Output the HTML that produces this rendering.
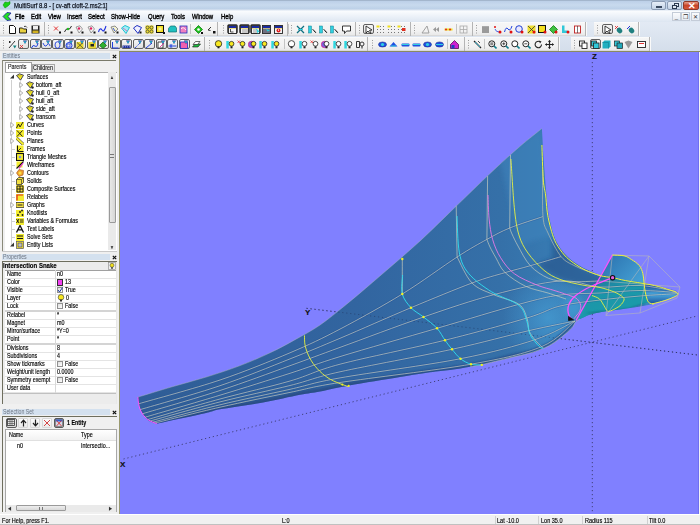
<!DOCTYPE html><html><head><meta charset="utf-8"><style>
*{margin:0;padding:0;box-sizing:border-box}
html,body{width:700px;height:525px;overflow:hidden;background:#f0f0f0;font-family:"Liberation Sans",sans-serif;font-size:7px;color:#000}
.a{position:absolute}
.tx{position:absolute;white-space:nowrap;line-height:8px;transform:scaleX(0.79);transform-origin:0 0;-webkit-text-stroke-width:0.15px}
#title{left:0;top:0;width:700px;height:11px;background:linear-gradient(#8a9cb2 0,#bcd0e8 1px,#c8daee 5px,#bcd0e8 9px,#dfe8f3 10px,#f4f7fb 11px)}
#menu{left:0;top:11px;width:700px;height:11px;background:linear-gradient(#fafcfe,#e9eff7 60%,#dde6f1)}
#tbarea{left:0;top:22px;width:700px;height:29px;background:linear-gradient(#e3eaf4,#d4deeb)}
.tb{position:absolute;background:linear-gradient(#fdfdfd,#f0f0f0 70%,#e6e6e6);border-bottom:1px solid #bdbdbd;border-right:1px solid #e0e0e0}
#left{left:0;top:51px;width:119px;height:463px;background:#f0f0f0}
#view{left:119px;top:51px;width:581px;height:463px;background:#8080ff;overflow:hidden;border-left:1px solid #9a9a70;border-top:1px solid #8a8a60}
#status{left:0;top:514px;width:700px;height:11px;background:#f0f0f0;border-top:1px solid #fff}
.hdr{position:absolute;height:6px;background:#d4e1ef;font-size:6.5px;color:#6a7380;line-height:6px;padding-left:1px;white-space:nowrap}
.grip{position:absolute;width:1px;height:9px;border-left:1px dotted #a0a0a0}
.sep{position:absolute;width:1px;height:10px;background:#c5c5c5;border-right:1px solid #fff}
.fb{position:absolute;width:11px;height:11px;border:1px solid #7a7a7a;border-radius:2px;background:linear-gradient(#f6f6f6,#dadada)}
</style></head><body>
<div id="title" class="a">
<svg class="a" style="left:2px;top:1px" width="9" height="8" viewBox="0 0 9 8"><path d="M1 4 L3 1 L6 1.5 L8 0.5 L8 3 L6 5 L3 7 Z" fill="#19d219" stroke="#0a8a0a" stroke-width="0.5"/></svg>
<div class="tx" style="left:14px;top:1.5px;font-size:7.5px;color:#101520;-webkit-text-stroke:0.25px #101520">MultiSurf 8.8 - [ cv-aft cloft-2.ms2:1]</div>
<div class="a" style="left:651px;top:1px;width:15px;height:9px;border:1px solid #8a9bb3;border-radius:2px;background:linear-gradient(#e6eef8,#c3d3e6)"><div class="a" style="left:4px;top:4px;width:6px;height:2px;background:#fff;border:1px solid #3a4a60"></div></div>
<div class="a" style="left:667px;top:1px;width:15px;height:9px;border:1px solid #8a9bb3;border-radius:2px;background:linear-gradient(#e6eef8,#c3d3e6)"><div class="a" style="left:6px;top:1px;width:5px;height:4px;border:1px solid #2a3a50;background:#dfe8f2"></div><div class="a" style="left:4px;top:3px;width:5px;height:4px;border:1px solid #2a3a50;background:#dfe8f2"></div></div>
<div class="a" style="left:683px;top:1px;width:16px;height:9px;border:1px solid #8d3a2a;border-radius:2px;background:linear-gradient(#e8a08a,#c8452a 50%,#d8583a)"><div class="a" style="left:4px;top:-1.5px;font-size:9px;font-weight:bold;color:#fff;line-height:10px">&#x2715;</div></div>
</div>
<div id="menu" class="a">
<svg class="a" style="left:2px;top:1px" width="10" height="9" viewBox="0 0 10 9"><path d="M1 4.5 L5 0.5 L9 1 L6 4.5 L9 8 L5 8.5 Z" fill="#22dd22" stroke="#1a1aa0" stroke-width="0.8"/></svg>
<div class="tx" style="left:15px;top:2px;font-size:7px;color:#000;transform:scaleX(0.85);-webkit-text-stroke:0.35px #000">File</div>
<div class="tx" style="left:31px;top:2px;font-size:7px;color:#000;transform:scaleX(0.85);-webkit-text-stroke:0.35px #000">Edit</div>
<div class="tx" style="left:48px;top:2px;font-size:7px;color:#000;transform:scaleX(0.85);-webkit-text-stroke:0.35px #000">View</div>
<div class="tx" style="left:67px;top:2px;font-size:7px;color:#000;transform:scaleX(0.85);-webkit-text-stroke:0.35px #000">Insert</div>
<div class="tx" style="left:88px;top:2px;font-size:7px;color:#000;transform:scaleX(0.85);-webkit-text-stroke:0.35px #000">Select</div>
<div class="tx" style="left:111px;top:2px;font-size:7px;color:#000;transform:scaleX(0.85);-webkit-text-stroke:0.35px #000">Show-Hide</div>
<div class="tx" style="left:148px;top:2px;font-size:7px;color:#000;transform:scaleX(0.85);-webkit-text-stroke:0.35px #000">Query</div>
<div class="tx" style="left:171px;top:2px;font-size:7px;color:#000;transform:scaleX(0.85);-webkit-text-stroke:0.35px #000">Tools</div>
<div class="tx" style="left:192px;top:2px;font-size:7px;color:#000;transform:scaleX(0.85);-webkit-text-stroke:0.35px #000">Window</div>
<div class="tx" style="left:221px;top:2px;font-size:7px;color:#000;transform:scaleX(0.85);-webkit-text-stroke:0.35px #000">Help</div>
<div class="a" style="left:672px;top:1px;width:9px;height:9px;border:1px solid #c4ccd8;background:linear-gradient(#fafbfd,#e6ebf2);font-size:6px;line-height:8px;text-align:center;color:#333">_</div>
<div class="a" style="left:681px;top:1px;width:9px;height:9px;border:1px solid #c4ccd8;background:linear-gradient(#fafbfd,#e6ebf2);font-size:6px;line-height:8px;text-align:center;color:#333">&#x2750;</div>
<div class="a" style="left:691px;top:1px;width:9px;height:9px;border:1px solid #c4ccd8;background:linear-gradient(#fafbfd,#e6ebf2);font-size:6px;line-height:8px;text-align:center;color:#333">&#x2715;</div>
</div>
<div id="tbarea" class="a"></div>
<div class="a" style="left:0px;top:22px;width:45px;height:14px;background:linear-gradient(#ffffff 0,#f6f6f6 1px,#f2f2f2 9px,#e9e9e9 13px,#c9c9c9 14px);border-right:1px solid #b4b4b4;box-shadow:1px 0 0 #fafafa"></div>
<div class="a" style="left:45px;top:22px;width:173px;height:14px;background:linear-gradient(#ffffff 0,#f6f6f6 1px,#f2f2f2 9px,#e9e9e9 13px,#c9c9c9 14px);border-right:1px solid #b4b4b4;box-shadow:1px 0 0 #fafafa"></div>
<div class="a" style="left:218px;top:22px;width:70px;height:14px;background:linear-gradient(#ffffff 0,#f6f6f6 1px,#f2f2f2 9px,#e9e9e9 13px,#c9c9c9 14px);border-right:1px solid #b4b4b4;box-shadow:1px 0 0 #fafafa"></div>
<div class="a" style="left:288px;top:22px;width:68px;height:14px;background:linear-gradient(#ffffff 0,#f6f6f6 1px,#f2f2f2 9px,#e9e9e9 13px,#c9c9c9 14px);border-right:1px solid #b4b4b4;box-shadow:1px 0 0 #fafafa"></div>
<div class="a" style="left:356px;top:22px;width:55px;height:14px;background:linear-gradient(#ffffff 0,#f6f6f6 1px,#f2f2f2 9px,#e9e9e9 13px,#c9c9c9 14px);border-right:1px solid #b4b4b4;box-shadow:1px 0 0 #fafafa"></div>
<div class="a" style="left:411px;top:22px;width:62px;height:14px;background:linear-gradient(#ffffff 0,#f6f6f6 1px,#f2f2f2 9px,#e9e9e9 13px,#c9c9c9 14px);border-right:1px solid #b4b4b4;box-shadow:1px 0 0 #fafafa"></div>
<div class="a" style="left:473px;top:22px;width:113px;height:14px;background:linear-gradient(#ffffff 0,#f6f6f6 1px,#f2f2f2 9px,#e9e9e9 13px,#c9c9c9 14px);border-right:1px solid #b4b4b4;box-shadow:1px 0 0 #fafafa"></div>
<div class="a" style="left:593.5px;top:22px;width:45.0px;height:14px;background:linear-gradient(#ffffff 0,#f6f6f6 1px,#f2f2f2 9px,#e9e9e9 13px,#c9c9c9 14px);border-right:1px solid #b4b4b4;box-shadow:1px 0 0 #fafafa"></div>
<svg class="a" style="left:2px;top:24px" width="3" height="10"><g fill="#9a9a9a"><rect x="1" y="1" width="1" height="1"/><rect x="1" y="3.5" width="1" height="1"/><rect x="1" y="6" width="1" height="1"/><rect x="1" y="8.5" width="1" height="1"/></g></svg>
<svg class="a" style="left:47px;top:24px" width="3" height="10"><g fill="#9a9a9a"><rect x="1" y="1" width="1" height="1"/><rect x="1" y="3.5" width="1" height="1"/><rect x="1" y="6" width="1" height="1"/><rect x="1" y="8.5" width="1" height="1"/></g></svg>
<svg class="a" style="left:222px;top:24px" width="3" height="10"><g fill="#9a9a9a"><rect x="1" y="1" width="1" height="1"/><rect x="1" y="3.5" width="1" height="1"/><rect x="1" y="6" width="1" height="1"/><rect x="1" y="8.5" width="1" height="1"/></g></svg>
<svg class="a" style="left:290px;top:24px" width="3" height="10"><g fill="#9a9a9a"><rect x="1" y="1" width="1" height="1"/><rect x="1" y="3.5" width="1" height="1"/><rect x="1" y="6" width="1" height="1"/><rect x="1" y="8.5" width="1" height="1"/></g></svg>
<svg class="a" style="left:358px;top:24px" width="3" height="10"><g fill="#9a9a9a"><rect x="1" y="1" width="1" height="1"/><rect x="1" y="3.5" width="1" height="1"/><rect x="1" y="6" width="1" height="1"/><rect x="1" y="8.5" width="1" height="1"/></g></svg>
<svg class="a" style="left:413px;top:24px" width="3" height="10"><g fill="#9a9a9a"><rect x="1" y="1" width="1" height="1"/><rect x="1" y="3.5" width="1" height="1"/><rect x="1" y="6" width="1" height="1"/><rect x="1" y="8.5" width="1" height="1"/></g></svg>
<svg class="a" style="left:475px;top:24px" width="3" height="10"><g fill="#9a9a9a"><rect x="1" y="1" width="1" height="1"/><rect x="1" y="3.5" width="1" height="1"/><rect x="1" y="6" width="1" height="1"/><rect x="1" y="8.5" width="1" height="1"/></g></svg>
<svg class="a" style="left:596px;top:24px" width="3" height="10"><g fill="#9a9a9a"><rect x="1" y="1" width="1" height="1"/><rect x="1" y="3.5" width="1" height="1"/><rect x="1" y="6" width="1" height="1"/><rect x="1" y="8.5" width="1" height="1"/></g></svg>
<svg class="a" style="left:7.5px;top:24.5px" width="9" height="9" viewBox="0 0 9 9"><path d="M1.5 0.5h4l2 2v6h-6z" fill="#fff" stroke="#111" stroke-width="1"/></svg>
<svg class="a" style="left:19.0px;top:24.5px" width="9" height="9" viewBox="0 0 9 9"><path d="M0.5 3h3l1 1h3v4h-7z" fill="#e8d040" stroke="#111" stroke-width="0.9"/><path d="M5 1.5 Q7 0.5 8 2.5" stroke="#111" fill="none" stroke-width="0.8"/></svg>
<svg class="a" style="left:31.0px;top:24.5px" width="9" height="9" viewBox="0 0 9 9"><rect x="0.5" y="0.5" width="8" height="8" fill="#222"/><rect x="2" y="1" width="5" height="3.5" fill="#eee"/><rect x="1.5" y="5.5" width="6" height="2.5" fill="#d0b020"/></svg>
<svg class="a" style="left:52.5px;top:24.5px" width="9" height="9" viewBox="0 0 9 9"><path d="M1 1.5L5 5.5M5 1.5L1 5.5" stroke="#e02020" stroke-width="0.9"/><rect x="6" y="6.5" width="2" height="2" fill="#111"/></svg>
<svg class="a" style="left:63.5px;top:24.5px" width="9" height="9" viewBox="0 0 9 9"><path d="M0.5 7 Q2 3 4 4 T7.5 1" fill="none" stroke="#111" stroke-width="0.9"/><circle cx="4" cy="4" r="1.2" fill="#20c020"/><rect x="6.5" y="6.5" width="2" height="2" fill="#111"/></svg>
<svg class="a" style="left:74.5px;top:24.5px" width="9" height="9" viewBox="0 0 9 9"><path d="M1 2 L5 0.8 L7.5 4 L4 8 Z" fill="#f4f4f4" stroke="#777" stroke-width="0.7"/><circle cx="4" cy="3.5" r="1.2" fill="#e02060"/><rect x="6.5" y="6.5" width="2" height="2" fill="#111"/></svg>
<svg class="a" style="left:86.5px;top:24.5px" width="9" height="9" viewBox="0 0 9 9"><path d="M1 2 L5 0.8 L7.5 4 L4 8 Z" fill="#f4f4f4" stroke="#777" stroke-width="0.7"/><circle cx="4" cy="3.5" r="1.2" fill="#e02060"/><rect x="6.5" y="6.5" width="2" height="2" fill="#111"/></svg>
<svg class="a" style="left:98.0px;top:24.5px" width="9" height="9" viewBox="0 0 9 9"><path d="M0.5 7 Q2 2 4 5 T8 1" fill="none" stroke="#2030e0" stroke-width="1.1"/><rect x="6.5" y="6.5" width="2" height="2" fill="#111"/></svg>
<svg class="a" style="left:109.5px;top:24.5px" width="9" height="9" viewBox="0 0 9 9"><path d="M1 2 L5 1 L8 4 L4 8 Z" fill="#f0f0d0" stroke="#666" stroke-width="0.7"/><path d="M3 3 L5 6" stroke="#2040d0" stroke-width="0.9"/><rect x="6.5" y="6.5" width="2" height="2" fill="#111"/></svg>
<svg class="a" style="left:121.1px;top:24.5px" width="9" height="9" viewBox="0 0 9 9"><path d="M0.5 3 L4 0.5 L8.5 2.5 L5 8.5 Z" fill="#a0f0f8" stroke="#20c0d0" stroke-width="1"/><path d="M2 3 L6 6" stroke="#e040a0" stroke-width="0.7"/></svg>
<svg class="a" style="left:132.5px;top:24.5px" width="9" height="9" viewBox="0 0 9 9"><path d="M0.5 3 L4 0.5 L8.5 2.5 L5 8.5 Z" fill="#f0f0ff" stroke="#2030c0" stroke-width="1"/><rect x="6.5" y="6.5" width="2" height="2" fill="#111"/></svg>
<svg class="a" style="left:144.9px;top:24.5px" width="9" height="9" viewBox="0 0 9 9"><rect x="0.5" y="0.5" width="8" height="8" fill="#f0e030"/><circle cx="2.5" cy="2.5" r="1.5" fill="none" stroke="#333" stroke-width="0.7"/><circle cx="6.5" cy="2.5" r="1.5" fill="none" stroke="#333" stroke-width="0.7"/><circle cx="2.5" cy="6.5" r="1.5" fill="none" stroke="#333" stroke-width="0.7"/><circle cx="6.5" cy="6.5" r="1.5" fill="none" stroke="#333" stroke-width="0.7"/></svg>
<svg class="a" style="left:155.5px;top:24.5px" width="9" height="9" viewBox="0 0 9 9"><rect x="0.5" y="0.5" width="7" height="7" fill="#f4e020" stroke="#111" stroke-width="1"/><rect x="2.5" y="2.5" width="3" height="3" fill="#f8f0a0"/><rect x="7" y="7" width="2" height="2" fill="#111"/></svg>
<svg class="a" style="left:167.5px;top:24.5px" width="9" height="9" viewBox="0 0 9 9"><path d="M0.5 7 V3.5 L2.5 1 H7 L8.5 3 V7 Z" fill="#20c0c0" stroke="#107070" stroke-width="0.7"/></svg>
<svg class="a" style="left:178.5px;top:24.5px" width="9" height="9" viewBox="0 0 9 9"><rect x="1" y="1" width="7" height="7" fill="#f080c0" stroke="#2030c0" stroke-width="0.8"/><path d="M2 4 Q4 1 7 5" stroke="#fff" fill="none" stroke-width="0.8"/></svg>
<div class="a" style="left:190px;top:24px;width:1px;height:10px;background:#c4c4c4"></div>
<svg class="a" style="left:193.5px;top:24.5px" width="9" height="9" viewBox="0 0 9 9"><path d="M4.5 0.5 L8.5 4.5 L4.5 8.5 L0.5 4.5Z" fill="#20c020" stroke="#108010" stroke-width="0.8"/><circle cx="4.5" cy="4.5" r="1.3" fill="#fff"/><rect x="7" y="7" width="2" height="2" fill="#111"/></svg>
<svg class="a" style="left:206.5px;top:24.5px" width="9" height="9" viewBox="0 0 9 9"><path d="M1 5 L4 2 M1 5 L3.5 5.5" stroke="#222" stroke-width="0.9" fill="none"/><rect x="6" y="6" width="2.5" height="2.5" fill="#111"/></svg>
<div class="a" style="left:227px;top:24px;width:11px;height:10px;border:1px solid #606060;border-radius:2px;background:linear-gradient(#f6f6f6,#e0e0e0)"></div>
<div class="a" style="left:238.5px;top:24px;width:11.0px;height:10px;border:1px solid #606060;border-radius:2px;background:linear-gradient(#f6f6f6,#e0e0e0)"></div>
<div class="a" style="left:250px;top:24px;width:11px;height:10px;border:1px solid #606060;border-radius:2px;background:linear-gradient(#f6f6f6,#e0e0e0)"></div>
<svg class="a" style="left:228.0px;top:24.5px" width="9" height="9" viewBox="0 0 9 9"><rect x="0.5" y="0.5" width="8" height="8" fill="#f4f4f4" stroke="#222" stroke-width="0.9"/><rect x="1" y="1" width="7" height="2" fill="#1a2aa0"/><rect x="1" y="3" width="7" height="0.6" fill="#e8d040"/><path d="M2.5 4v3h3" stroke="#222" fill="none" stroke-width="0.8"/></svg>
<svg class="a" style="left:239.5px;top:24.5px" width="9" height="9" viewBox="0 0 9 9"><rect x="0.5" y="0.5" width="8" height="8" fill="#f4f4f4" stroke="#222" stroke-width="0.9"/><rect x="1" y="1" width="7" height="2" fill="#1a2aa0"/><rect x="1" y="3" width="7" height="0.6" fill="#e8d040"/><path d="M3 4v4M5 4v4M7 4v4" stroke="#666" stroke-width="0.6"/></svg>
<svg class="a" style="left:251.0px;top:24.5px" width="9" height="9" viewBox="0 0 9 9"><rect x="0.5" y="0.5" width="8" height="8" fill="#f4f4f4" stroke="#222" stroke-width="0.9"/><rect x="1" y="1" width="7" height="2" fill="#1a2aa0"/><rect x="1" y="3" width="7" height="0.6" fill="#e8d040"/><path d="M3 4v4M5 4v4" stroke="#666" stroke-width="0.6"/><path d="M5 3.5 L8 6.5 L6.3 6.5 L7 8.5" fill="#20d0e0" stroke="#20d0e0" stroke-width="0.8"/></svg>
<svg class="a" style="left:262.0px;top:24.5px" width="9" height="9" viewBox="0 0 9 9"><rect x="0.5" y="0.5" width="8" height="8" fill="#f4f4f4" stroke="#222" stroke-width="0.9"/><rect x="1" y="1" width="7" height="2" fill="#1a2aa0"/><rect x="1" y="3" width="7" height="0.6" fill="#e8d040"/><rect x="1" y="3.6" width="7" height="4.4" fill="#707080"/><path d="M4 4 L8 5.5 L5.5 6.5Z" fill="#20d0e0"/></svg>
<svg class="a" style="left:273.5px;top:24.5px" width="9" height="9" viewBox="0 0 9 9"><rect x="0.5" y="0.5" width="8" height="8" fill="#f4f4f4" stroke="#222" stroke-width="0.9"/><rect x="1" y="1" width="7" height="2" fill="#1a2aa0"/><rect x="1" y="3" width="7" height="0.6" fill="#e8d040"/><circle cx="4.5" cy="5.5" r="2" fill="#e02020"/><rect x="4.1" y="4.3" width="0.8" height="1.6" fill="#fff"/></svg>
<div class="a" style="left:288px;top:24px;width:1px;height:10px;background:#c4c4c4"></div>
<svg class="a" style="left:295.5px;top:24.5px" width="9" height="9" viewBox="0 0 9 9"><path d="M1 1L8 8M8 1L1 8" stroke="#107080" stroke-width="1.3"/><path d="M2 4.5h5" stroke="#30d0e0" stroke-width="1"/></svg>
<svg class="a" style="left:307.5px;top:24.5px" width="9" height="9" viewBox="0 0 9 9"><rect x="0.5" y="1" width="3" height="7" fill="#30d0e0" stroke="#108090" stroke-width="0.5"/><path d="M4.5 4 L7 7 M6 5.5 L8 8" stroke="#222" stroke-width="0.9"/></svg>
<svg class="a" style="left:318.5px;top:24.5px" width="9" height="9" viewBox="0 0 9 9"><rect x="0.5" y="1" width="3" height="7" fill="#30d0e0" stroke="#108090" stroke-width="0.5"/><path d="M4.5 4 L7 7 M6 5.5 L8 8" stroke="#222" stroke-width="0.9"/></svg>
<svg class="a" style="left:329.5px;top:24.5px" width="9" height="9" viewBox="0 0 9 9"><rect x="0.5" y="1" width="3" height="7" fill="#30d0e0" stroke="#108090" stroke-width="0.5"/><path d="M4.5 4 L7 7 M6 5.5 L8 8" stroke="#222" stroke-width="0.9"/></svg>
<svg class="a" style="left:341.5px;top:24.5px" width="9" height="9" viewBox="0 0 9 9"><path d="M0.5 1h8v5h-4l-2 2.5v-2.5h-2z" fill="#fff" stroke="#222" stroke-width="0.9"/></svg>
<div class="a" style="left:363px;top:24px;width:11px;height:10px;border:1px solid #606060;border-radius:2px;background:linear-gradient(#f6f6f6,#e0e0e0)"></div>
<svg class="a" style="left:364.0px;top:24.5px" width="9" height="9" viewBox="0 0 9 9"><path d="M2 1 L2 8 L4 6 L6 8.5 L7 8 L5.5 5.5 L8 5Z" fill="#fff" stroke="#111" stroke-width="0.8"/></svg>
<svg class="a" style="left:375.5px;top:24.5px" width="9" height="9" viewBox="0 0 9 9"><g fill="#777"><rect x="1" y="1" width="1" height="1"/><rect x="4" y="1" width="1" height="1"/><rect x="7" y="1" width="1" height="1"/><rect x="1" y="4" width="1" height="1"/><rect x="4" y="4" width="1" height="1"/><rect x="7" y="4" width="1" height="1"/><rect x="1" y="7" width="1" height="1"/><rect x="4" y="7" width="1" height="1"/><rect x="7" y="7" width="1" height="1"/></g><rect x="0.5" y="0.5" width="3" height="2" fill="#f0e020"/></svg>
<svg class="a" style="left:386.5px;top:24.5px" width="9" height="9" viewBox="0 0 9 9"><g fill="#777"><rect x="1" y="1" width="1" height="1"/><rect x="4" y="1" width="1" height="1"/><rect x="7" y="1" width="1" height="1"/><rect x="1" y="4" width="1" height="1"/><rect x="4" y="4" width="1" height="1"/><rect x="7" y="4" width="1" height="1"/><rect x="1" y="7" width="1" height="1"/><rect x="4" y="7" width="1" height="1"/><rect x="7" y="7" width="1" height="1"/></g><rect x="0.5" y="0.5" width="3" height="2" fill="#f0e020"/></svg>
<svg class="a" style="left:396.5px;top:24.5px" width="9" height="9" viewBox="0 0 9 9"><g fill="#777"><rect x="1" y="1" width="1" height="1"/><rect x="4" y="1" width="1" height="1"/><rect x="7" y="1" width="1" height="1"/><rect x="1" y="4" width="1" height="1"/><rect x="4" y="4" width="1" height="1"/><rect x="7" y="4" width="1" height="1"/><rect x="1" y="7" width="1" height="1"/><rect x="4" y="7" width="1" height="1"/><rect x="7" y="7" width="1" height="1"/></g><rect x="0.5" y="0.5" width="3" height="2" fill="#f0e020"/><rect x="5" y="3" width="3.5" height="3" fill="#e03020"/></svg>
<svg class="a" style="left:420.5px;top:24.5px" width="9" height="9" viewBox="0 0 9 9"><path d="M1 8 L6 1 L8 8Z" fill="none" stroke="#999" stroke-width="0.9"/></svg>
<svg class="a" style="left:431.5px;top:24.5px" width="9" height="9" viewBox="0 0 9 9"><path d="M1 4.5 L4 2 V7Z M4 4.5 L7 2 V7Z" fill="#999"/></svg>
<svg class="a" style="left:443.5px;top:24.5px" width="9" height="9" viewBox="0 0 9 9"><rect x="0.5" y="3.5" width="8" height="2" fill="#f0e020"/><circle cx="2" cy="4.5" r="1" fill="#e02020"/><circle cx="6" cy="4.5" r="1" fill="#e02020"/></svg>
<div class="a" style="left:456px;top:24px;width:1px;height:10px;background:#c4c4c4"></div>
<svg class="a" style="left:458.5px;top:24.5px" width="9" height="9" viewBox="0 0 9 9"><rect x="1" y="1" width="7" height="7" fill="none" stroke="#aaa" stroke-width="0.8"/><path d="M1 4.5h7M4.5 1v7" stroke="#aaa" stroke-width="0.8"/></svg>
<svg class="a" style="left:480.5px;top:24.5px" width="9" height="9" viewBox="0 0 9 9"><rect x="1" y="1" width="7" height="7" fill="#aaa"/><path d="M1 3h7M1 5h7M1 7h7" stroke="#777" stroke-width="0.6"/></svg>
<svg class="a" style="left:492.5px;top:24.5px" width="9" height="9" viewBox="0 0 9 9"><path d="M1 1 L3 3 M3 1L1 3" stroke="#e02020" stroke-width="0.8"/><path d="M2 4 Q3 7 6 7" fill="none" stroke="#2040e0" stroke-width="0.8"/><circle cx="7" cy="7" r="1.5" fill="#e01010"/></svg>
<svg class="a" style="left:503.5px;top:24.5px" width="9" height="9" viewBox="0 0 9 9"><path d="M0.5 7 Q2 1 4 4 T8 1" fill="none" stroke="#2040e0" stroke-width="1"/><circle cx="7" cy="7" r="1.5" fill="#e01010"/></svg>
<svg class="a" style="left:514.5px;top:24.5px" width="9" height="9" viewBox="0 0 9 9"><circle cx="4" cy="4" r="3.3" fill="#e8e8ff" stroke="#2040d0" stroke-width="1"/><circle cx="7" cy="7" r="1.5" fill="#e01010"/></svg>
<svg class="a" style="left:526.5px;top:24.5px" width="9" height="9" viewBox="0 0 9 9"><rect x="0.5" y="0.5" width="8" height="8" fill="#f0e030"/><path d="M1 1L8 8M8 1L1 8" stroke="#333" stroke-width="0.8"/><circle cx="7" cy="7" r="1.5" fill="#e01010"/></svg>
<svg class="a" style="left:537.5px;top:24.5px" width="9" height="9" viewBox="0 0 9 9"><rect x="0.5" y="0.5" width="7" height="7" fill="#f4e020" stroke="#111" stroke-width="1"/><circle cx="7" cy="7" r="1.5" fill="#e01010"/></svg>
<svg class="a" style="left:548.5px;top:24.5px" width="9" height="9" viewBox="0 0 9 9"><path d="M4.5 0.5 L8.5 4.5 L4.5 8.5 L0.5 4.5Z" fill="#40c040" stroke="#108010" stroke-width="0.8"/><circle cx="7" cy="7" r="1.5" fill="#e01010"/></svg>
<svg class="a" style="left:560.5px;top:24.5px" width="9" height="9" viewBox="0 0 9 9"><path d="M1 0.5 h2.5 v5 h3 v2.5 h-5.5z" fill="#30c8d8"/><circle cx="7" cy="7" r="1.5" fill="#e01010"/></svg>
<svg class="a" style="left:572.5px;top:24.5px" width="9" height="9" viewBox="0 0 9 9"><rect x="1.5" y="1" width="6" height="7" fill="#fff" stroke="#c02020" stroke-width="0.9"/><path d="M4.5 1v7" stroke="#222" stroke-width="0.6"/></svg>
<div class="a" style="left:602px;top:24px;width:10.5px;height:10px;border:1px solid #606060;border-radius:2px;background:linear-gradient(#f6f6f6,#e0e0e0)"></div>
<svg class="a" style="left:602.5px;top:24.5px" width="9" height="9" viewBox="0 0 9 9"><path d="M2 1 L2 8 L4 6 L6 8.5 L7 8 L5.5 5.5 L8 5Z" fill="#fff" stroke="#111" stroke-width="0.8"/></svg>
<svg class="a" style="left:614.0px;top:24.5px" width="9" height="9" viewBox="0 0 9 9"><path d="M1 1L4 4M4 1L1 4" stroke="#e02020" stroke-width="0.8"/><ellipse cx="5.5" cy="5.5" rx="2.5" ry="3" fill="#208080" transform="rotate(-40 5.5 5.5)"/></svg>
<svg class="a" style="left:625.5px;top:24.5px" width="9" height="9" viewBox="0 0 9 9"><path d="M1 4L4 1" stroke="#2030e0" stroke-width="1"/><ellipse cx="5.5" cy="5.5" rx="2.5" ry="3" fill="#208080" transform="rotate(-40 5.5 5.5)"/></svg>
<div class="a" style="left:0px;top:37px;width:205px;height:14px;background:linear-gradient(#ffffff 0,#f6f6f6 1px,#f2f2f2 9px,#e9e9e9 13px,#c9c9c9 14px);border-right:1px solid #b4b4b4;box-shadow:1px 0 0 #fafafa"></div>
<div class="a" style="left:205px;top:37px;width:163px;height:14px;background:linear-gradient(#ffffff 0,#f6f6f6 1px,#f2f2f2 9px,#e9e9e9 13px,#c9c9c9 14px);border-right:1px solid #b4b4b4;box-shadow:1px 0 0 #fafafa"></div>
<div class="a" style="left:368px;top:37px;width:97px;height:14px;background:linear-gradient(#ffffff 0,#f6f6f6 1px,#f2f2f2 9px,#e9e9e9 13px,#c9c9c9 14px);border-right:1px solid #b4b4b4;box-shadow:1px 0 0 #fafafa"></div>
<div class="a" style="left:465px;top:37px;width:94px;height:14px;background:linear-gradient(#ffffff 0,#f6f6f6 1px,#f2f2f2 9px,#e9e9e9 13px,#c9c9c9 14px);border-right:1px solid #b4b4b4;box-shadow:1px 0 0 #fafafa"></div>
<div class="a" style="left:571px;top:37px;width:78.5px;height:14px;background:linear-gradient(#ffffff 0,#f6f6f6 1px,#f2f2f2 9px,#e9e9e9 13px,#c9c9c9 14px);border-right:1px solid #b4b4b4;box-shadow:1px 0 0 #fafafa"></div>
<svg class="a" style="left:2px;top:39px" width="3" height="10"><g fill="#9a9a9a"><rect x="1" y="1" width="1" height="1"/><rect x="1" y="3.5" width="1" height="1"/><rect x="1" y="6" width="1" height="1"/><rect x="1" y="8.5" width="1" height="1"/></g></svg>
<svg class="a" style="left:208px;top:39px" width="3" height="10"><g fill="#9a9a9a"><rect x="1" y="1" width="1" height="1"/><rect x="1" y="3.5" width="1" height="1"/><rect x="1" y="6" width="1" height="1"/><rect x="1" y="8.5" width="1" height="1"/></g></svg>
<svg class="a" style="left:371px;top:39px" width="3" height="10"><g fill="#9a9a9a"><rect x="1" y="1" width="1" height="1"/><rect x="1" y="3.5" width="1" height="1"/><rect x="1" y="6" width="1" height="1"/><rect x="1" y="8.5" width="1" height="1"/></g></svg>
<svg class="a" style="left:467px;top:39px" width="3" height="10"><g fill="#9a9a9a"><rect x="1" y="1" width="1" height="1"/><rect x="1" y="3.5" width="1" height="1"/><rect x="1" y="6" width="1" height="1"/><rect x="1" y="8.5" width="1" height="1"/></g></svg>
<svg class="a" style="left:573px;top:39px" width="3" height="10"><g fill="#9a9a9a"><rect x="1" y="1" width="1" height="1"/><rect x="1" y="3.5" width="1" height="1"/><rect x="1" y="6" width="1" height="1"/><rect x="1" y="8.5" width="1" height="1"/></g></svg>
<svg class="a" style="left:7.5px;top:39.5px" width="9" height="9" viewBox="0 0 9 9"><path d="M1 8 L7 1" stroke="#222" stroke-width="0.9"/><rect x="1" y="1" width="1.5" height="2" fill="#222"/><path d="M5 5.5 h3.5 L6.8 8.5Z" fill="#108080"/></svg>
<div class="a" style="left:18.0px;top:39px;width:11.2px;height:10px;border:1px solid #606060;border-radius:2px;background:linear-gradient(#f6f6f6,#e0e0e0)"></div>
<svg class="a" style="left:19.1px;top:39.5px" width="9" height="9" viewBox="0 0 9 9"><path d="M1 5L4 8M4 5L1 8" stroke="#e02020" stroke-width="0.8"/><path d="M4 0.5 h4 l-2 3.5z" fill="#102080"/><circle cx="6" cy="2" r="0.9" fill="#30d0e0"/></svg>
<div class="a" style="left:29.5px;top:39px;width:11.200000000000003px;height:10px;border:1px solid #606060;border-radius:2px;background:linear-gradient(#f6f6f6,#e0e0e0)"></div>
<svg class="a" style="left:30.6px;top:39.5px" width="9" height="9" viewBox="0 0 9 9"><path d="M0.5 8 Q2 4 4 6 T7 3" fill="none" stroke="#2040e0" stroke-width="1"/><path d="M4 0.5 h4 l-2 3.5z" fill="#102080"/><circle cx="6" cy="2" r="0.9" fill="#30d0e0"/></svg>
<div class="a" style="left:40.9px;top:39px;width:11.200000000000003px;height:10px;border:1px solid #606060;border-radius:2px;background:linear-gradient(#f6f6f6,#e0e0e0)"></div>
<svg class="a" style="left:42.0px;top:39.5px" width="9" height="9" viewBox="0 0 9 9"><path d="M1 3 Q3 8 5 5 T8 6" fill="none" stroke="#2040e0" stroke-width="0.9"/><path d="M4 0.5 h4 l-2 3.5z" fill="#102080"/><circle cx="6" cy="2" r="0.9" fill="#30d0e0"/></svg>
<div class="a" style="left:52.4px;top:39px;width:11.200000000000003px;height:10px;border:1px solid #606060;border-radius:2px;background:linear-gradient(#f6f6f6,#e0e0e0)"></div>
<svg class="a" style="left:53.5px;top:39.5px" width="9" height="9" viewBox="0 0 9 9"><ellipse cx="3.5" cy="5" rx="2.5" ry="3.3" fill="none" stroke="#2040e0" stroke-width="0.9"/><path d="M4 0.5 h4 l-2 3.5z" fill="#102080"/><circle cx="6" cy="2" r="0.9" fill="#30d0e0"/></svg>
<div class="a" style="left:63.9px;top:39px;width:11.199999999999996px;height:10px;border:1px solid #606060;border-radius:2px;background:linear-gradient(#f6f6f6,#e0e0e0)"></div>
<svg class="a" style="left:65.0px;top:39.5px" width="9" height="9" viewBox="0 0 9 9"><circle cx="4" cy="5.5" r="3" fill="none" stroke="#2040e0" stroke-width="1"/><rect x="2" y="4" width="3" height="3" fill="none" stroke="#2040e0" stroke-width="0.7"/><path d="M4 0.5 h4 l-2 3.5z" fill="#102080"/><circle cx="6" cy="2" r="0.9" fill="#30d0e0"/></svg>
<div class="a" style="left:75.3px;top:39px;width:11.200000000000003px;height:10px;border:1px solid #606060;border-radius:2px;background:linear-gradient(#f6f6f6,#e0e0e0)"></div>
<svg class="a" style="left:76.4px;top:39.5px" width="9" height="9" viewBox="0 0 9 9"><rect x="0.5" y="2" width="7" height="6.5" fill="#e8d830"/><path d="M1 2.5 L7 8 M7 2.5 L1 8" stroke="#333" stroke-width="0.7"/><path d="M4 0.5 h4 l-2 3.5z" fill="#102080"/><circle cx="6" cy="2" r="0.9" fill="#30d0e0"/></svg>
<div class="a" style="left:86.8px;top:39px;width:11.200000000000003px;height:10px;border:1px solid #606060;border-radius:2px;background:linear-gradient(#f6f6f6,#e0e0e0)"></div>
<svg class="a" style="left:87.9px;top:39.5px" width="9" height="9" viewBox="0 0 9 9"><rect x="0.5" y="2" width="7.5" height="6.5" fill="#e8d830"/><rect x="2.5" y="4" width="3.5" height="2.5" fill="#222"/><path d="M4 0.5 h4 l-2 3.5z" fill="#102080"/><circle cx="6" cy="2" r="0.9" fill="#30d0e0"/></svg>
<div class="a" style="left:98.3px;top:39px;width:11.200000000000003px;height:10px;border:1px solid #606060;border-radius:2px;background:linear-gradient(#f6f6f6,#e0e0e0)"></div>
<svg class="a" style="left:99.4px;top:39.5px" width="9" height="9" viewBox="0 0 9 9"><path d="M4 2 L7.5 5.5 L4 8.5 L0.5 5.5Z" fill="#30b030" stroke="#106010" stroke-width="0.7"/><path d="M4 0.5 h4 l-2 3.5z" fill="#102080"/><circle cx="6" cy="2" r="0.9" fill="#30d0e0"/></svg>
<div class="a" style="left:109.8px;top:39px;width:11.200000000000003px;height:10px;border:1px solid #606060;border-radius:2px;background:linear-gradient(#f6f6f6,#e0e0e0)"></div>
<svg class="a" style="left:110.9px;top:39.5px" width="9" height="9" viewBox="0 0 9 9"><path d="M1.5 2v6h6" fill="none" stroke="#2040e0" stroke-width="1"/><path d="M4 0.5 h4 l-2 3.5z" fill="#102080"/><circle cx="6" cy="2" r="0.9" fill="#30d0e0"/></svg>
<div class="a" style="left:121.2px;top:39px;width:11.200000000000003px;height:10px;border:1px solid #606060;border-radius:2px;background:linear-gradient(#f6f6f6,#e0e0e0)"></div>
<svg class="a" style="left:122.3px;top:39.5px" width="9" height="9" viewBox="0 0 9 9"><rect x="0.5" y="5.5" width="8" height="2.5" fill="#2030a0"/><path d="M1 6.8h7" stroke="#fff" stroke-width="0.5" stroke-dasharray="1 1"/><path d="M4 0.5 h4 l-2 3.5z" fill="#102080"/><circle cx="6" cy="2" r="0.9" fill="#30d0e0"/></svg>
<div class="a" style="left:132.7px;top:39px;width:11.200000000000017px;height:10px;border:1px solid #606060;border-radius:2px;background:linear-gradient(#f6f6f6,#e0e0e0)"></div>
<svg class="a" style="left:133.8px;top:39.5px" width="9" height="9" viewBox="0 0 9 9"><path d="M1 8 L6 3" stroke="#2040e0" stroke-width="1" stroke-dasharray="1.2 0.8"/><path d="M4 0.5 h4 l-2 3.5z" fill="#102080"/><circle cx="6" cy="2" r="0.9" fill="#30d0e0"/></svg>
<div class="a" style="left:144.2px;top:39px;width:11.200000000000017px;height:10px;border:1px solid #606060;border-radius:2px;background:linear-gradient(#f6f6f6,#e0e0e0)"></div>
<svg class="a" style="left:145.3px;top:39.5px" width="9" height="9" viewBox="0 0 9 9"><path d="M1 8 L7 3" stroke="#2040e0" stroke-width="1"/><path d="M4 0.5 h4 l-2 3.5z" fill="#102080"/><circle cx="6" cy="2" r="0.9" fill="#30d0e0"/></svg>
<div class="a" style="left:155.6px;top:39px;width:11.200000000000017px;height:10px;border:1px solid #606060;border-radius:2px;background:linear-gradient(#f6f6f6,#e0e0e0)"></div>
<svg class="a" style="left:156.7px;top:39.5px" width="9" height="9" viewBox="0 0 9 9"><path d="M1 2h5v6h-5z" fill="#fff" stroke="#333" stroke-width="0.9"/><path d="M3 7L7 3" stroke="#e020a0" stroke-width="0.8"/><path d="M4 0.5 h4 l-2 3.5z" fill="#102080"/><circle cx="6" cy="2" r="0.9" fill="#30d0e0"/></svg>
<div class="a" style="left:167.1px;top:39px;width:11.200000000000017px;height:10px;border:1px solid #606060;border-radius:2px;background:linear-gradient(#f6f6f6,#e0e0e0)"></div>
<svg class="a" style="left:168.2px;top:39.5px" width="9" height="9" viewBox="0 0 9 9"><path d="M0.5 6 h8" stroke="#2040e0" stroke-width="1"/><path d="M2 4 L4 8 M4 4L2 8" stroke="#2040e0" stroke-width="0.7"/><path d="M4 0.5 h4 l-2 3.5z" fill="#102080"/><circle cx="6" cy="2" r="0.9" fill="#30d0e0"/></svg>
<div class="a" style="left:178.6px;top:39px;width:11.200000000000017px;height:10px;border:1px solid #606060;border-radius:2px;background:linear-gradient(#f6f6f6,#e0e0e0)"></div>
<svg class="a" style="left:179.7px;top:39.5px" width="9" height="9" viewBox="0 0 9 9"><rect x="0.5" y="2" width="7" height="6.5" fill="#f060b0" stroke="#2030c0" stroke-width="0.8"/><path d="M4 0.5 h4 l-2 3.5z" fill="#102080"/><circle cx="6" cy="2" r="0.9" fill="#30d0e0"/></svg>
<svg class="a" style="left:191.5px;top:39.5px" width="9" height="9" viewBox="0 0 9 9"><path d="M0.5 7 L3 4 H8.5 L6 7Z" fill="#20c040" stroke="#111" stroke-width="0.6"/><path d="M1 4.5 L3.5 1.5 H8 L5.5 4.5Z" fill="#fff" stroke="#111" stroke-width="0.6"/></svg>
<svg class="a" style="left:213.5px;top:39.5px" width="9" height="9" viewBox="0 0 9 9"><circle cx="4.5" cy="3.8" r="3.2" fill="#f8e820" stroke="#222" stroke-width="0.8"/><rect x="3.5" y="6.3" width="2" height="2" fill="#222"/></svg>
<svg class="a" style="left:225.5px;top:39.5px" width="9" height="9" viewBox="0 0 9 9"><rect x="0.3" y="1" width="2.5" height="7.5" fill="#30d8e0"/><circle cx="5.5" cy="3.8" r="2.4" fill="#f8e820" stroke="#222" stroke-width="0.8"/><rect x="4.5" y="6.3" width="2" height="2" fill="#222"/></svg>
<svg class="a" style="left:236.5px;top:39.5px" width="9" height="9" viewBox="0 0 9 9"><path d="M0.5 0.5L3 3M3 0.5L0.5 3" stroke="#e02020" stroke-width="0.7"/><circle cx="5.5" cy="3.8" r="2.4" fill="#f8e820" stroke="#222" stroke-width="0.8"/><rect x="4.5" y="6.3" width="2" height="2" fill="#222"/></svg>
<svg class="a" style="left:248.0px;top:39.5px" width="9" height="9" viewBox="0 0 9 9"><circle cx="3.5" cy="4.5" r="3.2" fill="#8060e0" stroke="#e02080" stroke-width="0.7"/><circle cx="5.5" cy="3.8" r="2.4" fill="#f8e820" stroke="#222" stroke-width="0.8"/><rect x="4.5" y="6.3" width="2" height="2" fill="#222"/></svg>
<svg class="a" style="left:259.2px;top:39.5px" width="9" height="9" viewBox="0 0 9 9"><rect x="0.3" y="1" width="2.5" height="7.5" fill="#30d8e0"/><circle cx="5.5" cy="3.8" r="2.4" fill="#f8e820" stroke="#222" stroke-width="0.8"/><rect x="4.5" y="6.3" width="2" height="2" fill="#222"/></svg>
<svg class="a" style="left:270.5px;top:39.5px" width="9" height="9" viewBox="0 0 9 9"><rect x="0.3" y="1" width="2.5" height="7.5" fill="#30d8e0"/><circle cx="5.5" cy="3.8" r="2.4" fill="#f8e820" stroke="#222" stroke-width="0.8"/><rect x="4.5" y="6.3" width="2" height="2" fill="#222"/></svg>
<div class="a" style="left:284px;top:39px;width:1px;height:10px;background:#c4c4c4"></div>
<svg class="a" style="left:286.5px;top:39.5px" width="9" height="9" viewBox="0 0 9 9"><circle cx="4.5" cy="3.8" r="3.2" fill="#fff" stroke="#222" stroke-width="0.8"/><rect x="3.5" y="6.3" width="2" height="2" fill="#222"/></svg>
<svg class="a" style="left:298.5px;top:39.5px" width="9" height="9" viewBox="0 0 9 9"><rect x="0.3" y="1" width="2.5" height="7.5" fill="#30d8e0"/><circle cx="5.5" cy="3.8" r="2.4" fill="#fff" stroke="#222" stroke-width="0.8"/><rect x="4.5" y="6.3" width="2" height="2" fill="#222"/></svg>
<svg class="a" style="left:309.5px;top:39.5px" width="9" height="9" viewBox="0 0 9 9"><path d="M0.5 0.5L3 3M3 0.5L0.5 3" stroke="#e02020" stroke-width="0.7"/><circle cx="5.5" cy="3.8" r="2.4" fill="#fff" stroke="#222" stroke-width="0.8"/><rect x="4.5" y="6.3" width="2" height="2" fill="#222"/></svg>
<svg class="a" style="left:320.5px;top:39.5px" width="9" height="9" viewBox="0 0 9 9"><circle cx="3.5" cy="4.5" r="3.2" fill="#8060e0" stroke="#e02080" stroke-width="0.7"/><circle cx="5.5" cy="3.8" r="2.4" fill="#fff" stroke="#222" stroke-width="0.8"/><rect x="4.5" y="6.3" width="2" height="2" fill="#222"/></svg>
<svg class="a" style="left:332.5px;top:39.5px" width="9" height="9" viewBox="0 0 9 9"><rect x="0.3" y="1" width="2.5" height="7.5" fill="#30d8e0"/><circle cx="5.5" cy="3.8" r="2.4" fill="#fff" stroke="#222" stroke-width="0.8"/><rect x="4.5" y="6.3" width="2" height="2" fill="#222"/></svg>
<svg class="a" style="left:343.5px;top:39.5px" width="9" height="9" viewBox="0 0 9 9"><rect x="0.3" y="1" width="2.5" height="7.5" fill="#30d8e0"/><circle cx="5.5" cy="3.8" r="2.4" fill="#fff" stroke="#222" stroke-width="0.8"/><rect x="4.5" y="6.3" width="2" height="2" fill="#222"/></svg>
<svg class="a" style="left:355.5px;top:39.5px" width="9" height="9" viewBox="0 0 9 9"><path d="M0.5 1.5h3v6h-3z" fill="none" stroke="#222" stroke-width="0.9"/><circle cx="6" cy="4" r="2" fill="none" stroke="#222" stroke-width="0.9"/><path d="M6 6v2.5" stroke="#222"/></svg>
<svg class="a" style="left:377.5px;top:39.5px" width="9" height="9" viewBox="0 0 9 9"><ellipse cx="4.5" cy="4.5" rx="4" ry="2.6" fill="#2050e0" stroke="#102080" stroke-width="0.5"/><circle cx="4.5" cy="4.5" r="1.6" fill="#30d0e0"/></svg>
<svg class="a" style="left:388.5px;top:39.5px" width="9" height="9" viewBox="0 0 9 9"><path d="M0.5 6.5 L4.5 2 L8.5 6.5Z" fill="#2050e0"/><path d="M2 6h5" stroke="#30d0e0"/></svg>
<svg class="a" style="left:400.5px;top:39.5px" width="9" height="9" viewBox="0 0 9 9"><rect x="0.5" y="3.5" width="8" height="3" rx="1" fill="#2050e0"/><path d="M1 4.5h7" stroke="#30d0e0"/></svg>
<svg class="a" style="left:411.5px;top:39.5px" width="9" height="9" viewBox="0 0 9 9"><rect x="0.5" y="3.5" width="8" height="3" rx="1" fill="#2050e0"/><path d="M1 4.5h7" stroke="#30d0e0"/></svg>
<svg class="a" style="left:422.5px;top:39.5px" width="9" height="9" viewBox="0 0 9 9"><ellipse cx="4.5" cy="4.5" rx="4" ry="2.6" fill="#2050e0" stroke="#102080" stroke-width="0.5"/><circle cx="4.5" cy="4.5" r="1.6" fill="#30d0e0"/></svg>
<svg class="a" style="left:434.5px;top:39.5px" width="9" height="9" viewBox="0 0 9 9"><ellipse cx="4.5" cy="4.5" rx="4" ry="2.6" fill="#2050e0" stroke="#102080" stroke-width="0.5"/><path d="M1 4.5h7" stroke="#30d0e0" stroke-width="1"/></svg>
<div class="a" style="left:447px;top:39px;width:1px;height:10px;background:#c4c4c4"></div>
<svg class="a" style="left:449.5px;top:39.5px" width="9" height="9" viewBox="0 0 9 9"><path d="M0.5 4.5 L4.5 0.5 L8.5 4.5 V8.5 H0.5Z" fill="#d020d0" stroke="#400040" stroke-width="0.7"/><rect x="1.5" y="5" width="3" height="3.5" fill="#2040c0"/></svg>
<svg class="a" style="left:472.5px;top:39.5px" width="9" height="9" viewBox="0 0 9 9"><path d="M1 1 L8 8" stroke="#222" stroke-width="1.3"/><path d="M2 2 L7 7" stroke="#30c0e0" stroke-width="0.8"/><path d="M5 1 L7 3" stroke="#222" stroke-width="0.8"/></svg>
<div class="a" style="left:484px;top:39px;width:1px;height:10px;background:#c4c4c4"></div>
<svg class="a" style="left:487.5px;top:39.5px" width="9" height="9" viewBox="0 0 9 9"><circle cx="3.8" cy="3.8" r="3" fill="#fff" stroke="#222" stroke-width="1"/><path d="M6 6 L8.5 8.5" stroke="#108090" stroke-width="1.6"/><rect x="2.3" y="2.3" width="3" height="3" fill="#888"/></svg>
<svg class="a" style="left:499.5px;top:39.5px" width="9" height="9" viewBox="0 0 9 9"><circle cx="3.8" cy="3.8" r="3" fill="#fff" stroke="#222" stroke-width="1"/><path d="M6 6 L8.5 8.5" stroke="#108090" stroke-width="1.6"/><path d="M2.3 3.8h3M3.8 2.3v3" stroke="#222" stroke-width="0.8"/></svg>
<svg class="a" style="left:510.5px;top:39.5px" width="9" height="9" viewBox="0 0 9 9"><circle cx="3.8" cy="3.8" r="3" fill="#fff" stroke="#222" stroke-width="1"/><path d="M6 6 L8.5 8.5" stroke="#108090" stroke-width="1.6"/></svg>
<svg class="a" style="left:521.5px;top:39.5px" width="9" height="9" viewBox="0 0 9 9"><circle cx="3.8" cy="3.8" r="3" fill="#fff" stroke="#222" stroke-width="1"/><path d="M6 6 L8.5 8.5" stroke="#108090" stroke-width="1.6"/><path d="M2.3 3.8h3" stroke="#222" stroke-width="0.8"/></svg>
<svg class="a" style="left:533.5px;top:39.5px" width="9" height="9" viewBox="0 0 9 9"><path d="M7.5 4.5 A3.2 3.2 0 1 1 6 1.8" fill="none" stroke="#222" stroke-width="1.1"/><path d="M5 0.5 L7.5 1.5 L6 3.5Z" fill="#222"/></svg>
<svg class="a" style="left:544.5px;top:39.5px" width="9" height="9" viewBox="0 0 9 9"><path d="M4.5 0.5v8M0.5 4.5h8" stroke="#222" stroke-width="1.2"/><path d="M4.5 0 L3 2h3z M4.5 9 L3 7h3z M0 4.5 L2 3v3z M9 4.5 L7 3v3z" fill="#222"/></svg>
<div class="a" style="left:590px;top:39px;width:11px;height:10px;border:1px solid #606060;border-radius:2px;background:linear-gradient(#f6f6f6,#e0e0e0)"></div>
<svg class="a" style="left:578.5px;top:39.5px" width="9" height="9" viewBox="0 0 9 9"><rect x="0.5" y="1" width="5" height="5" fill="none" stroke="#222" stroke-width="0.9"/><rect x="3" y="3" width="5" height="5.5" fill="#fff" stroke="#222" stroke-width="0.9"/></svg>
<svg class="a" style="left:591.0px;top:39.5px" width="9" height="9" viewBox="0 0 9 9"><rect x="0.5" y="1" width="5" height="5" fill="#30c8d8" stroke="#222" stroke-width="0.8"/><rect x="2.5" y="3" width="5.5" height="5.5" fill="#30c8d8" stroke="#222" stroke-width="0.8"/></svg>
<svg class="a" style="left:602.0px;top:39.5px" width="9" height="9" viewBox="0 0 9 9"><path d="M0.5 2.5 L2.5 0.5 H8.5 V6.5 L6.5 8.5 H0.5Z" fill="#20b0c0"/><path d="M0.5 2.5 H6.5 V8.5" fill="none" stroke="#108090" stroke-width="0.6"/></svg>
<svg class="a" style="left:613.5px;top:39.5px" width="9" height="9" viewBox="0 0 9 9"><rect x="0.5" y="1" width="5" height="5" fill="#30c8d8" stroke="#222" stroke-width="0.7"/><rect x="3" y="3" width="5.5" height="5.5" fill="#20a8b8" stroke="#222" stroke-width="0.7"/></svg>
<svg class="a" style="left:624.1px;top:39.5px" width="9" height="9" viewBox="0 0 9 9"><path d="M0.5 2 L4.5 0.5 L8.5 2 L4.5 8.5Z" fill="#999"/></svg>
<svg class="a" style="left:636.5px;top:39.5px" width="9" height="9" viewBox="0 0 9 9"><rect x="0.5" y="1.5" width="8" height="6" fill="#fff" stroke="#222" stroke-width="0.9"/><path d="M2 3.5h5" stroke="#e02020" stroke-width="0.9"/></svg>
<div id="left" class="a">
<div class="hdr" style="left:2px;top:2px;width:108px"><span style="display:inline-block;transform:scaleX(0.8);transform-origin:0 0">Entities</span></div>
<svg class="a" style="left:112px;top:3px" width="5" height="5"><path d="M0.8 0.8L4.2 4.2M4.2 0.8L0.8 4.2" stroke="#111" stroke-width="1.2"/></svg>
<div class="a" style="left:2px;top:9px;width:114px;height:1px;background:#7a7a6a"></div>
<div class="a" style="left:2px;top:9px;width:1px;height:191px;background:#8a8a7a"></div>
<div class="a" style="left:5px;top:11px;width:27px;height:10px;background:#fff;border:1px solid #a0a0a0;border-bottom:none"></div>
<div class="tx" style="left:8px;top:12px;font-size:6.8px;color:#222">Parents</div>
<div class="a" style="left:32px;top:12.5px;width:23px;height:8px;background:linear-gradient(#f4f4f4,#e0e0e0);border:1px solid #a8a8a8;border-bottom:none"></div>
<div class="tx" style="left:33px;top:13px;font-size:6.8px;color:#222">Children</div>
<div class="a" style="left:5px;top:20.5px;width:112px;height:179.0px;background:#fff;border-top:1px solid #b0b0b0"></div>
<div class="a" style="left:108px;top:21px;width:8px;height:178px;background:#eaeaea"></div>
<div class="a" style="left:108.5px;top:36px;width:7px;height:136px;background:linear-gradient(90deg,#e8e8e8,#d6d6d6);border:1px solid #9a9a9a;border-radius:1px"></div>
<div class="a" style="left:110px;top:103px;width:4px;height:4px;border-top:1px solid #777;border-bottom:1px solid #777"></div>
<div class="tx" style="left:110px;top:22px;font-size:5px;color:#333">&#x25B2;</div>
<div class="tx" style="left:110px;top:192px;font-size:5px;color:#333">&#x25BC;</div>
<div class="a" style="left:11px;top:29px;width:1px;height:166px;background:#d0d0d0"></div>
<div class="a" style="left:20px;top:30px;width:1px;height:36px;background:#e0e0e0"></div>
<svg class="a" style="left:10px;top:23px" width="5" height="5"><path d="M4 0.5 L4 4.5 L0 4.5Z" fill="#333"/></svg>
<svg class="a" style="left:16px;top:22px" width="8" height="8" viewBox="0 0 8 8"><path d="M0.5 2.5 L3.5 0.8 L7.5 2.2 L4.5 7.2 Z" fill="#f4e81c" stroke="#1c1c50" stroke-width="0.8"/><path d="M2 2.5 L5.5 3" stroke="#777" stroke-width="0.5"/></svg>
<div class="tx" style="left:27px;top:22px;font-size:6.8px;color:#000">Surfaces</div>
<svg class="a" style="left:18.5px;top:31px" width="5" height="6"><path d="M0.7 0.5 L3.8 3 L0.7 5.5Z" fill="#fff" stroke="#9a9a9a" stroke-width="0.8"/></svg>
<svg class="a" style="left:26px;top:30px" width="8" height="8" viewBox="0 0 8 8"><path d="M0.5 2.5 L3.5 0.8 L7.5 2.2 L4.5 7.2 Z" fill="#f4e81c" stroke="#1c1c50" stroke-width="0.8"/><path d="M2 2.5 L5.5 3" stroke="#777" stroke-width="0.5"/><circle cx="6.5" cy="6.5" r="1.2" fill="#222"/></svg>
<div class="tx" style="left:36px;top:30px;font-size:6.8px;color:#000">bottom_aft</div>
<svg class="a" style="left:18.5px;top:39px" width="5" height="6"><path d="M0.7 0.5 L3.8 3 L0.7 5.5Z" fill="#fff" stroke="#9a9a9a" stroke-width="0.8"/></svg>
<svg class="a" style="left:26px;top:38px" width="8" height="8" viewBox="0 0 8 8"><path d="M0.5 2.5 L3.5 0.8 L7.5 2.2 L4.5 7.2 Z" fill="#f4e81c" stroke="#1c1c50" stroke-width="0.8"/><path d="M2 2.5 L5.5 3" stroke="#777" stroke-width="0.5"/><circle cx="6.5" cy="6.5" r="1.2" fill="#222"/></svg>
<div class="tx" style="left:36px;top:38px;font-size:6.8px;color:#000">hull_0_aft</div>
<svg class="a" style="left:18.5px;top:47px" width="5" height="6"><path d="M0.7 0.5 L3.8 3 L0.7 5.5Z" fill="#fff" stroke="#9a9a9a" stroke-width="0.8"/></svg>
<svg class="a" style="left:26px;top:46px" width="8" height="8" viewBox="0 0 8 8"><path d="M0.5 2.5 L3.5 0.8 L7.5 2.2 L4.5 7.2 Z" fill="#f4e81c" stroke="#1c1c50" stroke-width="0.8"/><path d="M2 2.5 L5.5 3" stroke="#777" stroke-width="0.5"/><circle cx="6.5" cy="6.5" r="1.2" fill="#222"/></svg>
<div class="tx" style="left:36px;top:46px;font-size:6.8px;color:#000">hull_aft</div>
<svg class="a" style="left:18.5px;top:55px" width="5" height="6"><path d="M0.7 0.5 L3.8 3 L0.7 5.5Z" fill="#fff" stroke="#9a9a9a" stroke-width="0.8"/></svg>
<svg class="a" style="left:26px;top:54px" width="8" height="8" viewBox="0 0 8 8"><path d="M0.5 2.5 L3.5 0.8 L7.5 2.2 L4.5 7.2 Z" fill="#f4e81c" stroke="#1c1c50" stroke-width="0.8"/><path d="M2 2.5 L5.5 3" stroke="#777" stroke-width="0.5"/><circle cx="6.5" cy="6.5" r="1.2" fill="#222"/></svg>
<div class="tx" style="left:36px;top:54px;font-size:6.8px;color:#000">side_aft</div>
<svg class="a" style="left:18.5px;top:63px" width="5" height="6"><path d="M0.7 0.5 L3.8 3 L0.7 5.5Z" fill="#fff" stroke="#9a9a9a" stroke-width="0.8"/></svg>
<svg class="a" style="left:26px;top:62px" width="8" height="8" viewBox="0 0 8 8"><path d="M0.5 2.5 L3.5 0.8 L7.5 2.2 L4.5 7.2 Z" fill="#f4e81c" stroke="#1c1c50" stroke-width="0.8"/><path d="M2 2.5 L5.5 3" stroke="#777" stroke-width="0.5"/><circle cx="6.5" cy="6.5" r="1.2" fill="#222"/></svg>
<div class="tx" style="left:36px;top:62px;font-size:6.8px;color:#000">transom</div>
<svg class="a" style="left:9.5px;top:71px" width="5" height="6"><path d="M0.7 0.5 L3.8 3 L0.7 5.5Z" fill="#fff" stroke="#9a9a9a" stroke-width="0.8"/></svg>
<svg class="a" style="left:16px;top:70px" width="8" height="8" viewBox="0 0 8 8"><rect x="0" y="1" width="8" height="7" fill="#f4ec30"/><path d="M0.5 7 L2.5 3 L4 6 L7 1" fill="none" stroke="#111" stroke-width="0.9"/></svg>
<div class="tx" style="left:27px;top:70px;font-size:6.8px;color:#000">Curves</div>
<svg class="a" style="left:9.5px;top:79px" width="5" height="6"><path d="M0.7 0.5 L3.8 3 L0.7 5.5Z" fill="#fff" stroke="#9a9a9a" stroke-width="0.8"/></svg>
<svg class="a" style="left:16px;top:78px" width="8" height="8" viewBox="0 0 8 8"><rect x="0" y="1" width="8" height="7" fill="#f4ec30"/><path d="M1 1.5L6.5 7.5M6.5 1.5L1 7.5" stroke="#111" stroke-width="0.9"/></svg>
<div class="tx" style="left:27px;top:78px;font-size:6.8px;color:#000">Points</div>
<svg class="a" style="left:9.5px;top:87px" width="5" height="6"><path d="M0.7 0.5 L3.8 3 L0.7 5.5Z" fill="#fff" stroke="#9a9a9a" stroke-width="0.8"/></svg>
<svg class="a" style="left:16px;top:86px" width="8" height="8" viewBox="0 0 8 8"><path d="M0.5 1 L7.5 7.5" stroke="#333" stroke-width="3"/><path d="M0.5 1 L7.5 7.5" stroke="#f4ec30" stroke-width="2"/></svg>
<div class="tx" style="left:27px;top:86px;font-size:6.8px;color:#000">Planes</div>
<div class="a" style="left:11px;top:98px;width:4px;height:1px;background:#d0d0d0"></div>
<svg class="a" style="left:16px;top:94px" width="8" height="8" viewBox="0 0 8 8"><rect x="0.5" y="0.5" width="7" height="7.5" fill="#f4ec30"/><path d="M1.5 0.5 V6.5 H7.5" fill="none" stroke="#111" stroke-width="1"/><path d="M1.5 6.5 L5 3" stroke="#111" stroke-width="0.8"/></svg>
<div class="tx" style="left:27px;top:94px;font-size:6.8px;color:#000">Frames</div>
<div class="a" style="left:11px;top:106px;width:4px;height:1px;background:#d0d0d0"></div>
<svg class="a" style="left:16px;top:102px" width="8" height="8" viewBox="0 0 8 8"><rect x="0.5" y="0.5" width="7" height="7" fill="#f4ec30" stroke="#111" stroke-width="1.1"/><circle cx="4" cy="4" r="1.3" fill="#8090e0"/></svg>
<div class="tx" style="left:27px;top:102px;font-size:6.8px;color:#000">Triangle Meshes</div>
<div class="a" style="left:11px;top:114px;width:4px;height:1px;background:#d0d0d0"></div>
<svg class="a" style="left:16px;top:110px" width="8" height="8" viewBox="0 0 8 8"><rect x="0.5" y="0.5" width="6" height="6" fill="#f4ec30"/><path d="M0.5 7.5 L7.5 0.5" stroke="#111" stroke-width="1.1"/><path d="M3 7.5 L7 2" stroke="#e020e0" stroke-width="1.2"/></svg>
<div class="tx" style="left:27px;top:110px;font-size:6.8px;color:#000">Wireframes</div>
<svg class="a" style="left:9.5px;top:119px" width="5" height="6"><path d="M0.7 0.5 L3.8 3 L0.7 5.5Z" fill="#fff" stroke="#9a9a9a" stroke-width="0.8"/></svg>
<svg class="a" style="left:16px;top:118px" width="8" height="8" viewBox="0 0 8 8"><path d="M0.5 4 L3 0.5 L7.5 1.5 L7 6 L3 7.5Z" fill="#f0a030" stroke="#a05010" stroke-width="0.6"/><circle cx="4" cy="4" r="1.5" fill="#f8e040"/></svg>
<div class="tx" style="left:27px;top:118px;font-size:6.8px;color:#000">Contours</div>
<div class="a" style="left:11px;top:130px;width:4px;height:1px;background:#d0d0d0"></div>
<svg class="a" style="left:16px;top:126px" width="8" height="8" viewBox="0 0 8 8"><path d="M0.5 2.5 L2.5 0.5 L7.5 0.5 L7.5 5.5 L5.5 7.5 L0.5 7.5Z" fill="#f4e040" stroke="#222" stroke-width="0.7"/><path d="M0.5 2.5H5.5V7.5M5.5 2.5L7.5 0.5" fill="none" stroke="#222" stroke-width="0.6"/></svg>
<div class="tx" style="left:27px;top:126px;font-size:6.8px;color:#000">Solids</div>
<div class="a" style="left:11px;top:138px;width:4px;height:1px;background:#d0d0d0"></div>
<svg class="a" style="left:16px;top:134px" width="8" height="8" viewBox="0 0 8 8"><rect x="0" y="0" width="8" height="8" fill="#f4e040"/><path d="M1 1h6v6h-6z M1 4h6 M4 1v6" fill="none" stroke="#111" stroke-width="0.9"/></svg>
<div class="tx" style="left:27px;top:134px;font-size:6.8px;color:#000">Composite Surfaces</div>
<div class="a" style="left:11px;top:146px;width:4px;height:1px;background:#d0d0d0"></div>
<svg class="a" style="left:16px;top:142px" width="8" height="8" viewBox="0 0 8 8"><rect x="0" y="1" width="8" height="7" fill="#f4ec30"/><path d="M1 7.5 V2 H7" fill="none" stroke="#e02020" stroke-width="1.2"/></svg>
<div class="tx" style="left:27px;top:142px;font-size:6.8px;color:#000">Relabels</div>
<svg class="a" style="left:9.5px;top:151px" width="5" height="6"><path d="M0.7 0.5 L3.8 3 L0.7 5.5Z" fill="#fff" stroke="#9a9a9a" stroke-width="0.8"/></svg>
<svg class="a" style="left:16px;top:150px" width="8" height="8" viewBox="0 0 8 8"><rect x="0" y="1.5" width="8" height="5" fill="#f4e040" stroke="#222" stroke-width="0.7"/><path d="M1.5 4 h5" stroke="#222" stroke-width="1"/></svg>
<div class="tx" style="left:27px;top:150px;font-size:6.8px;color:#000">Graphs</div>
<div class="a" style="left:11px;top:162px;width:4px;height:1px;background:#d0d0d0"></div>
<svg class="a" style="left:16px;top:158px" width="8" height="8" viewBox="0 0 8 8"><rect x="0" y="1" width="8" height="7" fill="#f4ec30"/><circle cx="2" cy="6" r="0.9" fill="#111"/><circle cx="4" cy="3" r="0.9" fill="#111"/><circle cx="6" cy="1.5" r="0.9" fill="#111"/><circle cx="6.5" cy="6" r="0.9" fill="#111"/></svg>
<div class="tx" style="left:27px;top:158px;font-size:6.8px;color:#000">Knotlists</div>
<div class="a" style="left:11px;top:170px;width:4px;height:1px;background:#d0d0d0"></div>
<svg class="a" style="left:16px;top:166px" width="8" height="8" viewBox="0 0 8 8"><rect x="0" y="1" width="8" height="7" fill="#f4ec30"/><path d="M0.5 2 L3 6 M3 2 L0.5 6 M4 3h3.5 M4 5h3.5" stroke="#111" stroke-width="0.9"/></svg>
<div class="tx" style="left:27px;top:166px;font-size:6.8px;color:#000">Variables &amp; Formulas</div>
<div class="a" style="left:11px;top:178px;width:4px;height:1px;background:#d0d0d0"></div>
<svg class="a" style="left:16px;top:174px" width="8" height="8" viewBox="0 0 8 8"><path d="M0.5 7.5 L4 0.5 L7.5 7.5 M2 4.8 H6" fill="none" stroke="#111" stroke-width="1.3"/></svg>
<div class="tx" style="left:27px;top:174px;font-size:6.8px;color:#000">Text Labels</div>
<div class="a" style="left:11px;top:186px;width:4px;height:1px;background:#d0d0d0"></div>
<svg class="a" style="left:16px;top:182px" width="8" height="8" viewBox="0 0 8 8"><rect x="0" y="1" width="8" height="7" fill="#f4ec30"/><path d="M1 3h6 M1 5.5h6" stroke="#111" stroke-width="1.1"/></svg>
<div class="tx" style="left:27px;top:182px;font-size:6.8px;color:#000">Solve Sets</div>
<svg class="a" style="left:10px;top:191px" width="5" height="5"><path d="M4 0.5 L4 4.5 L0 4.5Z" fill="#333"/></svg>
<svg class="a" style="left:16px;top:190px" width="8" height="8" viewBox="0 0 8 8"><rect x="0.5" y="0.5" width="7" height="7" fill="#f4e040" stroke="#555" stroke-width="0.7"/><rect x="2" y="2" width="4" height="4" fill="#bbb" stroke="#333" stroke-width="0.5"/></svg>
<div class="tx" style="left:27px;top:190px;font-size:6.8px;color:#000">Entity Lists</div>
<div class="a" style="left:2px;top:199.5px;width:115px;height:1px;background:#c8c8c8"></div>
<div class="hdr" style="left:2px;top:203px;width:108px"><span style="display:inline-block;transform:scaleX(0.8);transform-origin:0 0">Properties</span></div>
<svg class="a" style="left:112px;top:204px" width="5" height="5"><path d="M0.8 0.8L4.2 4.2M4.2 0.8L0.8 4.2" stroke="#111" stroke-width="1.2"/></svg>
<div class="a" style="left:2px;top:210px;width:115px;height:1px;background:#6e6e5e"></div>
<div class="a" style="left:2px;top:210px;width:1px;height:143px;background:#6e6e5e"></div>
<div class="a" style="left:3px;top:211px;width:113px;height:8px;background:#ececec"></div>
<div class="tx" style="left:3px;top:211px;font-size:7.2px;font-weight:bold;color:#000;transform:scaleX(0.84)">Intersection Snake</div>
<svg class="a" style="left:108px;top:211px" width="8" height="8"><rect x="0.5" y="0.5" width="7" height="7" fill="#f0f0f0" stroke="#888" stroke-width="0.6"/><circle cx="4" cy="3.3" r="2" fill="#f0e020" stroke="#333" stroke-width="0.5"/><rect x="3.2" y="5.2" width="1.6" height="1.6" fill="#333"/></svg>
<div class="a" style="left:4px;top:219px;width:112px;height:123px;background:#fff;border-top:1px solid #a0a0a0"></div>
<div class="a" style="left:3px;top:219px;width:2px;height:123px;background:#ececec"></div>
<div class="tx" style="left:7px;top:219.0px;font-size:6.8px;color:#000">Name</div>
<div class="tx" style="left:57px;top:219.0px;font-size:6.8px;color:#000">n0</div>
<div class="a" style="left:5px;top:227.3px;width:111px;height:1px;background:#e4e4e4"></div>
<div class="tx" style="left:7px;top:227.0px;font-size:6.8px;color:#000">Color</div>
<div class="a" style="left:56.5px;top:227.8px;width:6px;height:7px;background:#f040f0;border:1px solid #303030"></div>
<div class="tx" style="left:65px;top:227.0px;font-size:6.8px;color:#000">13</div>
<div class="a" style="left:5px;top:235.3px;width:111px;height:1px;background:#e4e4e4"></div>
<div class="tx" style="left:7px;top:235.0px;font-size:6.8px;color:#000">Visible</div>
<div class="a" style="left:57px;top:236.3px;width:6px;height:6px;background:linear-gradient(135deg,#ddd,#fff);border:1px solid #909090"></div>
<svg class="a" style="left:57px;top:236.3px" width="6" height="6"><path d="M1 3 L2.5 5 L5.5 0.5" fill="none" stroke="#1a3aa0" stroke-width="1"/></svg>
<div class="tx" style="left:65px;top:235.0px;font-size:6.8px;color:#000">True</div>
<div class="a" style="left:5px;top:243.3px;width:111px;height:1px;background:#e4e4e4"></div>
<div class="tx" style="left:7px;top:243.0px;font-size:6.8px;color:#000">Layer</div>
<svg class="a" style="left:57px;top:243.3px" width="8" height="8"><circle cx="4" cy="3.3" r="2.8" fill="#f8e820" stroke="#303030" stroke-width="0.6"/><rect x="3" y="5.5" width="2" height="2" fill="#333"/></svg>
<div class="tx" style="left:66px;top:243.0px;font-size:6.8px;color:#000">0</div>
<div class="a" style="left:5px;top:251.3px;width:111px;height:1px;background:#e4e4e4"></div>
<div class="tx" style="left:7px;top:251.0px;font-size:6.8px;color:#000">Lock</div>
<div class="a" style="left:57px;top:252.3px;width:6px;height:6px;background:linear-gradient(135deg,#ddd,#fff);border:1px solid #909090"></div>
<div class="tx" style="left:65px;top:251.0px;font-size:6.8px;color:#000">False</div>
<div class="a" style="left:5px;top:259.3px;width:111px;height:2px;background:#d4d4d4"></div>
<div class="tx" style="left:7px;top:260.0px;font-size:6.8px;color:#000">Relabel</div>
<div class="tx" style="left:57px;top:260.0px;font-size:6.8px;color:#000">*</div>
<div class="a" style="left:5px;top:268.3px;width:111px;height:1px;background:#e4e4e4"></div>
<div class="tx" style="left:7px;top:268.0px;font-size:6.8px;color:#000">Magnet</div>
<div class="tx" style="left:57px;top:268.0px;font-size:6.8px;color:#000">m0</div>
<div class="a" style="left:5px;top:276.3px;width:111px;height:1px;background:#e4e4e4"></div>
<div class="tx" style="left:7px;top:276.0px;font-size:6.8px;color:#000">Mirror/surface</div>
<div class="tx" style="left:57px;top:276.0px;font-size:6.8px;color:#000">*Y=0</div>
<div class="a" style="left:5px;top:284.3px;width:111px;height:1px;background:#e4e4e4"></div>
<div class="tx" style="left:7px;top:284.0px;font-size:6.8px;color:#000">Point</div>
<div class="tx" style="left:57px;top:284.0px;font-size:6.8px;color:#000">*</div>
<div class="a" style="left:5px;top:292.3px;width:111px;height:2px;background:#d4d4d4"></div>
<div class="tx" style="left:7px;top:293.0px;font-size:6.8px;color:#000">Divisions</div>
<div class="tx" style="left:57px;top:293.0px;font-size:6.8px;color:#000">8</div>
<div class="a" style="left:5px;top:301.3px;width:111px;height:1px;background:#e4e4e4"></div>
<div class="tx" style="left:7px;top:301.0px;font-size:6.8px;color:#000">Subdivisions</div>
<div class="tx" style="left:57px;top:301.0px;font-size:6.8px;color:#000">4</div>
<div class="a" style="left:5px;top:309.3px;width:111px;height:1px;background:#e4e4e4"></div>
<div class="tx" style="left:7px;top:309.0px;font-size:6.8px;color:#000">Show tickmarks</div>
<div class="a" style="left:57px;top:310.3px;width:6px;height:6px;background:linear-gradient(135deg,#ddd,#fff);border:1px solid #909090"></div>
<div class="tx" style="left:65px;top:309.0px;font-size:6.8px;color:#000">False</div>
<div class="a" style="left:5px;top:317.3px;width:111px;height:1px;background:#e4e4e4"></div>
<div class="tx" style="left:7px;top:317.0px;font-size:6.8px;color:#000">Weight/unit length</div>
<div class="tx" style="left:57px;top:317.0px;font-size:6.8px;color:#000">0.0000</div>
<div class="a" style="left:5px;top:325.3px;width:111px;height:1px;background:#e4e4e4"></div>
<div class="tx" style="left:7px;top:325.0px;font-size:6.8px;color:#000">Symmetry exempt</div>
<div class="a" style="left:57px;top:326.3px;width:6px;height:6px;background:linear-gradient(135deg,#ddd,#fff);border:1px solid #909090"></div>
<div class="tx" style="left:65px;top:325.0px;font-size:6.8px;color:#000">False</div>
<div class="a" style="left:5px;top:333.3px;width:111px;height:1px;background:#e4e4e4"></div>
<div class="tx" style="left:7px;top:333.0px;font-size:6.8px;color:#000">User data</div>
<div class="a" style="left:5px;top:341.3px;width:111px;height:1px;background:#e4e4e4"></div>
<div class="a" style="left:54.5px;top:219px;width:1px;height:123px;background:#d8d8d8"></div>
<div class="a" style="left:116px;top:211px;width:1px;height:142px;background:#e8e8e8"></div>
<div class="a" style="left:3px;top:342px;width:113px;height:11px;background:#ececec;border-top:1px solid #c0c0c0"></div>
<div class="hdr" style="left:2px;top:358px;width:108px"><span style="display:inline-block;transform:scaleX(0.8);transform-origin:0 0">Selection Set</span></div>
<svg class="a" style="left:112px;top:359px" width="5" height="5"><path d="M0.8 0.8L4.2 4.2M4.2 0.8L0.8 4.2" stroke="#111" stroke-width="1.2"/></svg>
<div class="a" style="left:2px;top:364.5px;width:115px;height:1px;background:#6e6e5e"></div>
<div class="a" style="left:2px;top:364.5px;width:1px;height:96.5px;background:#6e6e5e"></div>
<div class="a" style="left:5.5px;top:366.5px;width:11px;height:10px;border:1px solid #5a5a5a;border-radius:2px;background:linear-gradient(#f4f4f4,#dcdcdc)"></div>
<svg class="a" style="left:7px;top:368px" width="8" height="7"><rect x="0.5" y="0.5" width="7" height="6" fill="#e8e8e8" stroke="#333" stroke-width="0.8"/><path d="M3 0.5v6M5 0.5v6M0.5 2.5h7M0.5 4.5h7" stroke="#444" stroke-width="0.6"/></svg>
<div class="a" style="left:18px;top:366.5px;width:9.5px;height:10px;background:linear-gradient(#fbfbfb,#ebebeb);border:1px solid #d8d8d8;border-radius:1px"></div>
<div class="a" style="left:30px;top:366.5px;width:9.5px;height:10px;background:linear-gradient(#fbfbfb,#ebebeb);border:1px solid #d8d8d8;border-radius:1px"></div>
<div class="a" style="left:42px;top:366.5px;width:9.5px;height:10px;background:linear-gradient(#fbfbfb,#ebebeb);border:1px solid #d8d8d8;border-radius:1px"></div>
<svg class="a" style="left:19.5px;top:368px" width="7" height="8"><path d="M3.5 7.5V1.5M1 4L3.5 1.2L6 4" fill="none" stroke="#222" stroke-width="1.2"/></svg>
<svg class="a" style="left:31.5px;top:368px" width="7" height="8"><path d="M3.5 0.5V6.5M1 4L3.5 6.8L6 4" fill="none" stroke="#222" stroke-width="1.2"/></svg>
<svg class="a" style="left:43px;top:368px" width="8" height="8"><path d="M1 1L7 7M7 1L1 7" stroke="#d03030" stroke-width="0.9"/></svg>
<div class="a" style="left:53.5px;top:366.5px;width:10.5px;height:10px;border:1px solid #5a5a5a;border-radius:2px;background:linear-gradient(#f4f4f4,#dcdcdc)"></div>
<svg class="a" style="left:55px;top:368px" width="8" height="8"><rect x="0.5" y="0.5" width="7" height="7" fill="#d8d8e8" stroke="#555" stroke-width="0.6"/><rect x="0.5" y="0.5" width="7" height="2" fill="#3060d0"/><path d="M1.5 1.5L6.5 7M6.5 1.5L1.5 7" stroke="#d03030" stroke-width="0.9"/></svg>
<div class="tx" style="left:67px;top:367.5px;font-size:7px;color:#000;font-weight:bold;transform:scaleX(0.76)">1 Entity</div>
<div class="a" style="left:5px;top:377.5px;width:112px;height:83.5px;background:#fff;border:1px solid #a8a8a8;border-bottom:none"></div>
<div class="a" style="left:6px;top:378.5px;width:110px;height:11px;background:linear-gradient(#fff,#f2f2f2);border-bottom:1px solid #e0e0e0"></div>
<div class="tx" style="left:9px;top:380px;font-size:6.8px;color:#000">Name</div>
<div class="tx" style="left:81px;top:380px;font-size:6.8px;color:#000">Type</div>
<div class="tx" style="left:17px;top:390.5px;font-size:6.8px;color:#000">n0</div>
<div class="tx" style="left:81px;top:390.5px;font-size:6.8px;color:#000">Intersectio...</div>
<div class="a" style="left:6px;top:453.5px;width:110px;height:7px;background:#eaeaea"></div>
<div class="a" style="left:15.5px;top:454px;width:50px;height:6px;background:linear-gradient(#eee,#d8d8d8);border:1px solid #9a9a9a;border-radius:1px"></div>
<div class="a" style="left:39px;top:455.5px;width:4px;height:3px;border-left:1px solid #777;border-right:1px solid #777"></div>
<div class="tx" style="left:8px;top:453px;font-size:5px;color:#333">&#x25C0;</div>
<div class="tx" style="left:109px;top:453px;font-size:5px;color:#333">&#x25B6;</div>
<div class="a" style="left:117px;top:0px;width:2px;height:461px;background:#f0f0f0"></div>
</div>
<div id="view" class="a">
<svg class="a" style="left:0;top:0" width="580" height="462" viewBox="120 52 580 462">
<defs>
<linearGradient id="hg" x1="140" y1="0" x2="620" y2="0" gradientUnits="userSpaceOnUse">
<stop offset="0" stop-color="#2f5d96"/><stop offset="0.45" stop-color="#3265a0"/><stop offset="0.75" stop-color="#3570a8"/><stop offset="0.9" stop-color="#387eb6"/><stop offset="1" stop-color="#3a88c2"/></linearGradient>
<radialGradient id="hl" cx="548" cy="318" r="45" gradientUnits="userSpaceOnUse"><stop offset="0" stop-color="#4aa6dc" stop-opacity="0.6"/><stop offset="1" stop-color="#4aa0d8" stop-opacity="0"/></radialGradient>
<linearGradient id="tailg" x1="0" y1="285" x2="0" y2="304" gradientUnits="userSpaceOnUse"><stop offset="0" stop-color="#1c4f98"/><stop offset="0.5" stop-color="#48a8dc"/><stop offset="1" stop-color="#1c4f98"/></linearGradient>
<linearGradient id="fing2" x1="612" y1="256" x2="640" y2="282" gradientUnits="userSpaceOnUse"><stop offset="0" stop-color="#2f78b4"/><stop offset="1" stop-color="#44a0d4"/></linearGradient>
<linearGradient id="tealg" x1="600" y1="278" x2="612" y2="310" gradientUnits="userSpaceOnUse"><stop offset="0" stop-color="#24709c"/><stop offset="0.4" stop-color="#1c94a8"/><stop offset="1" stop-color="#1a9aaa"/></linearGradient>
<filter id="bl" x="-50%" y="-50%" width="200%" height="200%"><feGaussianBlur stdDeviation="2.5"/></filter><filter id="bl1" x="-50%" y="-50%" width="200%" height="200%"><feGaussianBlur stdDeviation="1"/></filter>
<clipPath id="hullclip"><path d="M137.9 397.1 C143.6 395.4 160.7 390.1 172.0 386.8 C183.3 383.5 194.7 380.6 206.0 377.1 C217.3 373.6 229.3 369.7 240.0 365.6 C250.7 361.6 260.8 357.1 270.0 352.8 C279.2 348.5 286.7 344.3 295.0 339.7 C303.3 335.1 311.7 330.7 320.0 325.0 C328.3 319.3 336.7 312.2 345.0 305.5 C353.3 298.8 361.7 291.6 370.0 284.5 C378.3 277.4 386.7 270.2 395.0 263.0 C403.3 255.8 411.7 248.7 420.0 241.0 C428.3 233.3 436.7 225.1 445.0 217.0 C453.3 208.9 461.7 200.7 470.0 192.7 C478.3 184.7 486.7 176.5 495.0 168.8 C503.3 161.1 512.2 153.0 520.0 146.3 C527.8 139.6 538.2 131.5 541.9 128.5 L541.9 128.5 C542.2 134.6 543.2 153.9 544.0 165.0 C544.8 176.1 545.8 187.5 546.5 195.0 C547.2 202.5 547.5 205.8 548.0 210.0 C548.5 214.2 548.9 216.4 549.7 220.0 C550.5 223.6 551.4 227.6 552.6 231.4 C553.8 235.2 555.0 239.1 557.1 242.9 C559.2 246.7 562.2 251.1 565.1 254.3 C568.0 257.5 570.9 259.8 574.3 262.3 C577.7 264.8 581.3 266.9 585.7 269.1 C590.1 271.3 598.0 274.4 600.5 275.5 L612.3 255.1 L612.3 255.1 C614.2 255.2 620.8 255.1 624.0 255.8 C627.2 256.5 628.8 257.9 631.4 259.5 C634.0 261.1 637.5 263.3 639.4 265.7 C641.3 268.1 642.0 270.8 642.9 273.7 C643.8 276.6 644.2 281.4 644.5 283.0 L644.5 283.0 C647.6 283.8 658.0 286.1 662.9 287.5 C667.8 288.9 671.4 290.3 674.0 291.3 C676.6 292.3 678.3 292.8 678.3 293.7 C678.3 294.6 678.3 294.8 674.0 296.5 C669.7 298.2 660.2 302.0 652.6 304.0 C645.0 306.0 638.3 306.7 628.6 308.3 C618.9 309.9 602.4 311.6 594.3 313.4 C586.2 315.2 582.4 318.1 580.0 319.0 L580.0 319.0 C579.2 319.5 576.7 320.6 575.5 321.8 C574.3 323.0 574.5 324.4 572.9 326.4 C571.3 328.4 568.1 331.5 565.7 333.6 C563.3 335.8 561.0 337.5 558.6 339.3 C556.2 341.1 553.8 342.9 551.4 344.3 C549.0 345.7 548.0 346.4 544.3 347.9 C540.6 349.4 534.2 351.8 529.0 353.3 C523.8 354.8 518.0 355.8 512.9 357.0 C507.8 358.2 503.4 359.3 498.6 360.5 C493.8 361.7 489.1 362.9 484.3 364.0 C479.5 365.1 475.7 365.8 470.0 366.8 C464.3 367.8 456.7 369.1 450.0 370.0 C443.3 370.9 438.3 371.1 430.0 372.3 C421.7 373.5 413.5 374.8 400.0 377.0 C386.5 379.2 362.3 383.1 349.0 385.5 C335.7 387.9 328.2 389.9 320.0 391.5 C311.8 393.1 309.5 393.0 300.0 394.8 C290.5 396.6 276.3 400.1 263.0 402.5 C249.7 404.9 229.5 407.6 220.0 409.3 C210.5 411.1 216.5 410.6 206.0 413.0 C195.5 415.4 165.2 421.8 157.1 423.6 L157.1 423.6 C155.7 423.1 151.0 422.2 148.6 420.7 C146.2 419.1 144.6 417.0 142.9 414.3 C141.2 411.6 139.4 407.2 138.6 404.3 C137.8 401.4 138.0 398.3 137.9 397.1Z"/></clipPath>
</defs>
<g stroke="#40407a" stroke-width="1" stroke-dasharray="1.2 2.8" fill="none">
<path d="M592.3 62 V514"/><path d="M123.5 459 L700 315.3"/><path d="M306.5 308.3 L700 355.3"/>
</g>
<path d="M137.9 397.1 C143.6 395.4 160.7 390.1 172.0 386.8 C183.3 383.5 194.7 380.6 206.0 377.1 C217.3 373.6 229.3 369.7 240.0 365.6 C250.7 361.6 260.8 357.1 270.0 352.8 C279.2 348.5 286.7 344.3 295.0 339.7 C303.3 335.1 311.7 330.7 320.0 325.0 C328.3 319.3 336.7 312.2 345.0 305.5 C353.3 298.8 361.7 291.6 370.0 284.5 C378.3 277.4 386.7 270.2 395.0 263.0 C403.3 255.8 411.7 248.7 420.0 241.0 C428.3 233.3 436.7 225.1 445.0 217.0 C453.3 208.9 461.7 200.7 470.0 192.7 C478.3 184.7 486.7 176.5 495.0 168.8 C503.3 161.1 512.2 153.0 520.0 146.3 C527.8 139.6 538.2 131.5 541.9 128.5 L541.9 128.5 C542.2 134.6 543.2 153.9 544.0 165.0 C544.8 176.1 545.8 187.5 546.5 195.0 C547.2 202.5 547.5 205.8 548.0 210.0 C548.5 214.2 548.9 216.4 549.7 220.0 C550.5 223.6 551.4 227.6 552.6 231.4 C553.8 235.2 555.0 239.1 557.1 242.9 C559.2 246.7 562.2 251.1 565.1 254.3 C568.0 257.5 570.9 259.8 574.3 262.3 C577.7 264.8 581.3 266.9 585.7 269.1 C590.1 271.3 598.0 274.4 600.5 275.5 L612.3 255.1 L612.3 255.1 C614.2 255.2 620.8 255.1 624.0 255.8 C627.2 256.5 628.8 257.9 631.4 259.5 C634.0 261.1 637.5 263.3 639.4 265.7 C641.3 268.1 642.0 270.8 642.9 273.7 C643.8 276.6 644.2 281.4 644.5 283.0 L644.5 283.0 C647.6 283.8 658.0 286.1 662.9 287.5 C667.8 288.9 671.4 290.3 674.0 291.3 C676.6 292.3 678.3 292.8 678.3 293.7 C678.3 294.6 678.3 294.8 674.0 296.5 C669.7 298.2 660.2 302.0 652.6 304.0 C645.0 306.0 638.3 306.7 628.6 308.3 C618.9 309.9 602.4 311.6 594.3 313.4 C586.2 315.2 582.4 318.1 580.0 319.0 L580.0 319.0 C579.2 319.5 576.7 320.6 575.5 321.8 C574.3 323.0 574.5 324.4 572.9 326.4 C571.3 328.4 568.1 331.5 565.7 333.6 C563.3 335.8 561.0 337.5 558.6 339.3 C556.2 341.1 553.8 342.9 551.4 344.3 C549.0 345.7 548.0 346.4 544.3 347.9 C540.6 349.4 534.2 351.8 529.0 353.3 C523.8 354.8 518.0 355.8 512.9 357.0 C507.8 358.2 503.4 359.3 498.6 360.5 C493.8 361.7 489.1 362.9 484.3 364.0 C479.5 365.1 475.7 365.8 470.0 366.8 C464.3 367.8 456.7 369.1 450.0 370.0 C443.3 370.9 438.3 371.1 430.0 372.3 C421.7 373.5 413.5 374.8 400.0 377.0 C386.5 379.2 362.3 383.1 349.0 385.5 C335.7 387.9 328.2 389.9 320.0 391.5 C311.8 393.1 309.5 393.0 300.0 394.8 C290.5 396.6 276.3 400.1 263.0 402.5 C249.7 404.9 229.5 407.6 220.0 409.3 C210.5 411.1 216.5 410.6 206.0 413.0 C195.5 415.4 165.2 421.8 157.1 423.6 L157.1 423.6 C155.7 423.1 151.0 422.2 148.6 420.7 C146.2 419.1 144.6 417.0 142.9 414.3 C141.2 411.6 139.4 407.2 138.6 404.3 C137.8 401.4 138.0 398.3 137.9 397.1Z" fill="url(#hg)"/>
<g clip-path="url(#hullclip)">
<rect x="440" y="250" width="200" height="120" fill="url(#hl)"/>
<path d="M500 160 L542 128 L546 200 L552 235 L520 245Z" fill="#3e88c0" fill-opacity="0.45" filter="url(#bl)"/>
<path d="M575.5 321.8 C575.1 322.6 574.5 324.4 572.9 326.4 C571.3 328.4 568.1 331.5 565.7 333.6 C563.3 335.8 561.0 337.5 558.6 339.3 C556.2 341.1 553.8 342.9 551.4 344.3 C549.0 345.7 548.0 346.4 544.3 347.9 C540.6 349.4 534.2 351.8 529.0 353.3 C523.8 354.8 518.0 355.8 512.9 357.0 C507.8 358.2 503.4 359.3 498.6 360.5 C493.8 361.7 489.1 362.9 484.3 364.0 C479.5 365.1 475.7 365.8 470.0 366.8 C464.3 367.8 456.7 369.1 450.0 370.0 C443.3 370.9 438.3 371.1 430.0 372.3 C421.7 373.5 413.5 374.8 400.0 377.0 C386.5 379.2 362.3 383.1 349.0 385.5 C335.7 387.9 328.2 389.9 320.0 391.5 C311.8 393.1 309.5 393.0 300.0 394.8 C290.5 396.6 276.3 400.1 263.0 402.5 C249.7 404.9 229.5 407.6 220.0 409.3 C210.5 411.1 216.5 410.6 206.0 413.0 C195.5 415.4 165.2 421.8 157.1 423.6" fill="none" stroke="#1e3a70" stroke-width="6" stroke-opacity="0.5" filter="url(#bl1)"/>
<path d="M552 238 L557 243 L565 254.3 L574.3 262.3 L585.7 269.1 L600 275 L612.6 277.7 L602 288 L582.9 285.1 L560 279.4 L544 270.3 L538 264 L552 258Z" fill="#24457e" fill-opacity="0.5" filter="url(#bl)"/>
<path d="M612.3 255.1 L612.3 255.1 C614.2 255.2 620.8 255.1 624.0 255.8 C627.2 256.5 628.8 257.9 631.4 259.5 C634.0 261.1 637.5 263.3 639.4 265.7 C641.3 268.1 642.0 270.8 642.9 273.7 C643.8 276.6 644.2 281.4 644.5 283.0 L644.5 283 L612.6 277.7 L603 273.3Z" fill="url(#fing2)"/>
<path d="M612.6 277.7 L625.7 280.6 L644.5 283 L645.7 294.3 L648.6 302.3 L628.6 308.3 L594.3 313.4 L578 320 L600.5 276Z" fill="url(#tealg)"/>
<path d="M585 313 L628.6 308.3 L648 302.5 L640 307 L600 315Z" fill="#125a70" fill-opacity="0.6" filter="url(#bl1)"/>
<ellipse cx="573" cy="306" rx="9" ry="11" fill="#45a0d8" fill-opacity="0.55" filter="url(#bl)"/>
<path d="M644.5 283 L662.9 287.5 L674 291.3 L678.3 293.7 L674 296.5 L652.6 304 L648.6 302.3 L645.7 294.3Z" fill="url(#tailg)"/>
</g>
<path d="M306.5 308.3 L700 355.3" stroke="#1c2850" stroke-width="1" stroke-opacity="0.45" stroke-dasharray="1.2 2.8" fill="none"/>
<g fill="none" stroke="#1d4a98" stroke-width="2.2" stroke-opacity="0.35">
<path d="M138.6 403.8 C152.2 399.8 194.8 388.5 220.0 380.0 C245.2 371.5 270.0 361.3 290.0 352.8 C310.0 344.3 321.3 338.9 340.0 329.1 C358.7 319.3 382.8 306.0 402.3 294.0 C421.8 282.0 443.0 266.1 457.1 257.0 C471.2 247.9 478.1 244.2 486.9 239.4 C495.7 234.6 500.4 231.8 509.7 228.0 C519.0 224.2 537.4 218.5 542.9 216.6"/>
<path d="M140.2 409.6 C153.5 405.6 195.0 394.2 220.0 385.7 C245.0 377.2 270.0 366.8 290.0 358.9 C310.0 351.0 319.8 346.8 340.0 338.3 C360.2 329.8 389.0 316.9 411.0 307.7 C433.0 298.5 456.3 288.9 472.0 283.0 C487.7 277.1 495.4 275.5 505.1 272.6 C514.8 269.7 521.0 268.4 530.3 265.7 C539.6 263.0 556.0 258.1 561.1 256.6"/>
<path d="M142.4 413.8 C155.3 409.9 195.4 398.5 220.0 390.5 C244.6 382.5 270.0 372.9 290.0 365.7 C310.0 358.5 317.8 355.5 340.0 347.4 C362.2 339.3 397.9 325.8 423.5 317.0 C449.1 308.2 470.9 300.7 493.7 294.7 C516.5 288.7 542.3 282.3 560.0 281.0 C577.7 279.7 586.7 286.2 600.0 287.0 C613.3 287.8 627.3 284.8 640.0 285.5 C652.7 286.2 670.0 290.5 676.0 291.5"/>
<path d="M145.1 417.2 C157.6 413.5 195.9 402.5 220.0 395.2 C244.1 387.9 270.0 379.7 290.0 373.3 C310.0 366.9 315.5 364.1 340.0 356.6 C364.5 349.1 407.2 337.0 437.0 328.3 C466.8 319.6 498.4 309.9 518.9 304.3 C539.4 298.8 546.5 296.9 560.0 295.0 C573.5 293.1 586.7 293.8 600.0 293.0 C613.3 292.2 627.2 290.6 640.0 290.5 C652.8 290.4 670.8 292.2 677.0 292.5"/>
<path d="M147.8 419.5 C159.9 416.1 196.3 405.4 220.0 399.0 C243.7 392.6 270.0 386.8 290.0 381.0 C310.0 375.2 314.2 371.0 340.0 364.2 C365.8 357.4 413.9 347.9 445.0 340.2 C476.1 332.5 507.7 323.7 526.9 318.0 C546.1 312.3 547.8 309.0 560.0 306.0 C572.2 303.0 586.7 301.7 600.0 300.0 C613.3 298.3 627.0 297.1 640.0 296.0 C653.0 294.9 671.7 294.0 678.0 293.6"/>
<path d="M150.2 421.0 C161.8 417.8 196.7 407.8 220.0 401.9 C243.3 396.0 270.0 390.5 290.0 385.5 C310.0 380.5 313.0 377.8 340.0 371.8 C367.0 365.8 420.5 356.2 452.0 349.3 C483.5 342.4 508.5 335.3 529.0 330.6 C549.5 325.9 567.3 322.6 575.0 321.0"/>
<path d="M152.8 422.2 C164.0 419.3 197.1 410.3 220.0 404.8 C242.9 399.3 270.0 393.8 290.0 389.3 C310.0 384.8 311.6 383.0 340.0 377.9 C368.4 372.8 428.0 365.1 460.5 358.7 C493.0 352.3 515.8 346.0 534.9 339.7 C554.0 333.4 568.3 324.1 575.0 321.0"/>
<path d="M155.1 423.0 C165.9 420.4 197.5 412.3 220.0 407.2 C242.5 402.1 270.0 396.5 290.0 392.4 C310.0 388.3 309.8 387.2 340.0 382.5 C370.2 377.8 437.4 370.2 471.0 364.2 C504.6 358.2 524.4 353.8 541.7 346.6 C559.0 339.4 569.5 325.3 575.0 321.0"/>
</g>
<g fill="none" stroke="#ccd0c0" stroke-width="0.7" stroke-opacity="0.95">
<path d="M138.6 403.8 C152.2 399.8 194.8 388.5 220.0 380.0 C245.2 371.5 270.0 361.3 290.0 352.8 C310.0 344.3 321.3 338.9 340.0 329.1 C358.7 319.3 382.8 306.0 402.3 294.0 C421.8 282.0 443.0 266.1 457.1 257.0 C471.2 247.9 478.1 244.2 486.9 239.4 C495.7 234.6 500.4 231.8 509.7 228.0 C519.0 224.2 537.4 218.5 542.9 216.6"/>
<path d="M140.2 409.6 C153.5 405.6 195.0 394.2 220.0 385.7 C245.0 377.2 270.0 366.8 290.0 358.9 C310.0 351.0 319.8 346.8 340.0 338.3 C360.2 329.8 389.0 316.9 411.0 307.7 C433.0 298.5 456.3 288.9 472.0 283.0 C487.7 277.1 495.4 275.5 505.1 272.6 C514.8 269.7 521.0 268.4 530.3 265.7 C539.6 263.0 556.0 258.1 561.1 256.6"/>
<path d="M142.4 413.8 C155.3 409.9 195.4 398.5 220.0 390.5 C244.6 382.5 270.0 372.9 290.0 365.7 C310.0 358.5 317.8 355.5 340.0 347.4 C362.2 339.3 397.9 325.8 423.5 317.0 C449.1 308.2 470.9 300.7 493.7 294.7 C516.5 288.7 542.3 282.3 560.0 281.0 C577.7 279.7 586.7 286.2 600.0 287.0 C613.3 287.8 627.3 284.8 640.0 285.5 C652.7 286.2 670.0 290.5 676.0 291.5"/>
<path d="M145.1 417.2 C157.6 413.5 195.9 402.5 220.0 395.2 C244.1 387.9 270.0 379.7 290.0 373.3 C310.0 366.9 315.5 364.1 340.0 356.6 C364.5 349.1 407.2 337.0 437.0 328.3 C466.8 319.6 498.4 309.9 518.9 304.3 C539.4 298.8 546.5 296.9 560.0 295.0 C573.5 293.1 586.7 293.8 600.0 293.0 C613.3 292.2 627.2 290.6 640.0 290.5 C652.8 290.4 670.8 292.2 677.0 292.5"/>
<path d="M147.8 419.5 C159.9 416.1 196.3 405.4 220.0 399.0 C243.7 392.6 270.0 386.8 290.0 381.0 C310.0 375.2 314.2 371.0 340.0 364.2 C365.8 357.4 413.9 347.9 445.0 340.2 C476.1 332.5 507.7 323.7 526.9 318.0 C546.1 312.3 547.8 309.0 560.0 306.0 C572.2 303.0 586.7 301.7 600.0 300.0 C613.3 298.3 627.0 297.1 640.0 296.0 C653.0 294.9 671.7 294.0 678.0 293.6"/>
<path d="M150.2 421.0 C161.8 417.8 196.7 407.8 220.0 401.9 C243.3 396.0 270.0 390.5 290.0 385.5 C310.0 380.5 313.0 377.8 340.0 371.8 C367.0 365.8 420.5 356.2 452.0 349.3 C483.5 342.4 508.5 335.3 529.0 330.6 C549.5 325.9 567.3 322.6 575.0 321.0"/>
<path d="M152.8 422.2 C164.0 419.3 197.1 410.3 220.0 404.8 C242.9 399.3 270.0 393.8 290.0 389.3 C310.0 384.8 311.6 383.0 340.0 377.9 C368.4 372.8 428.0 365.1 460.5 358.7 C493.0 352.3 515.8 346.0 534.9 339.7 C554.0 333.4 568.3 324.1 575.0 321.0"/>
<path d="M155.1 423.0 C165.9 420.4 197.5 412.3 220.0 407.2 C242.5 402.1 270.0 396.5 290.0 392.4 C310.0 388.3 309.8 387.2 340.0 382.5 C370.2 377.8 437.4 370.2 471.0 364.2 C504.6 358.2 524.4 353.8 541.7 346.6 C559.0 339.4 569.5 325.3 575.0 321.0"/>
<path d="M402.3 259.0 C402.3 264.8 402.3 288.2 402.3 294.0"/>
<path d="M456.2 205.7 L457.1 257 L457.1 257.0 C459.6 261.3 465.9 276.7 472.0 283.0 C478.1 289.3 485.9 291.1 493.7 294.7 C501.5 298.2 513.4 300.4 518.9 304.3 C524.4 308.2 525.2 313.6 526.9 318.0 C528.6 322.4 527.7 327.0 529.0 330.6 C530.3 334.2 532.8 337.0 534.9 339.7 C537.0 342.4 540.3 345.2 541.7 346.6 C543.1 348.0 543.0 347.9 543.3 348.2"/>
<path d="M487.6 176 L486.9 239.4 L486.9 239.4 C487.4 240.7 488.5 243.9 490.0 247.0 C491.5 250.1 493.5 253.7 496.0 258.0 C498.5 262.3 500.2 267.9 505.1 272.6 C510.1 277.3 518.6 282.9 525.7 286.3 C532.9 289.7 541.3 290.9 548.0 293.0 C554.7 295.1 563.0 298.0 566.0 299.0"/>
<path d="M510.5 155 L509.7 228 L509.7 228.0 C510.1 229.0 510.6 231.0 512.0 234.0 C513.4 237.0 515.0 240.7 518.0 246.0 C521.0 251.3 525.2 260.3 530.3 265.7 C535.4 271.1 542.1 275.6 548.6 278.3 C555.1 281.0 560.4 281.2 569.0 281.7 C577.6 282.1 594.8 281.1 600.0 281.0"/>
<path d="M612.3 255.1 L649 256 L640 313 L606 315.5 M649 256 L606 315.5 M649 256 L680 287 L677 298 L640 313 M600 281 L680 287 M612.3 255.1 L606 315.5" stroke="#b8b8b8" stroke-width="0.6"/>
</g>
<path d="M137.9 397.1 C143.6 395.4 160.7 390.1 172.0 386.8 C183.3 383.5 194.7 380.6 206.0 377.1 C217.3 373.6 229.3 369.7 240.0 365.6 C250.7 361.6 260.8 357.1 270.0 352.8 C279.2 348.5 286.7 344.3 295.0 339.7 C303.3 335.1 311.7 330.7 320.0 325.0 C328.3 319.3 336.7 312.2 345.0 305.5 C353.3 298.8 361.7 291.6 370.0 284.5 C378.3 277.4 386.7 270.2 395.0 263.0 C403.3 255.8 411.7 248.7 420.0 241.0 C428.3 233.3 436.7 225.1 445.0 217.0 C453.3 208.9 461.7 200.7 470.0 192.7 C478.3 184.7 486.7 176.5 495.0 168.8 C503.3 161.1 512.2 153.0 520.0 146.3 C527.8 139.6 538.2 131.5 541.9 128.5" fill="none" stroke="#a8b4c4" stroke-width="0.6" stroke-opacity="0.8"/>
<path d="M580.0 319.0 C579.2 319.5 576.7 320.6 575.5 321.8 C574.3 323.0 574.5 324.4 572.9 326.4 C571.3 328.4 568.1 331.5 565.7 333.6 C563.3 335.8 561.0 337.5 558.6 339.3 C556.2 341.1 553.8 342.9 551.4 344.3 C549.0 345.7 548.0 346.4 544.3 347.9 C540.6 349.4 534.2 351.8 529.0 353.3 C523.8 354.8 518.0 355.8 512.9 357.0 C507.8 358.2 503.4 359.3 498.6 360.5 C493.8 361.7 489.1 362.9 484.3 364.0 C479.5 365.1 472.4 366.3 470.0 366.8" fill="none" stroke="#c8c8a8" stroke-width="0.6" stroke-opacity="0.8"/>
<path d="M137.9 397.1 C138.0 398.2 138.2 401.7 138.6 403.8 C139.0 405.9 139.6 407.9 140.2 409.6 C140.9 411.3 141.6 412.5 142.4 413.8 C143.2 415.0 144.2 416.2 145.1 417.2 C146.0 418.1 147.0 418.8 147.8 419.5 C148.7 420.1 149.3 420.5 150.2 421.0 C151.0 421.4 151.9 421.8 152.8 422.2 C153.6 422.5 154.4 422.8 155.1 423.0 C155.8 423.3 156.8 423.5 157.1 423.6" fill="none" stroke="#ff50ff" stroke-width="1"/>
<path d="M304.5 335.4 C304.6 337.1 304.3 342.1 305.2 345.9 C306.1 349.7 307.8 354.3 309.8 358.1 C311.8 361.9 314.4 365.5 317.4 368.8 C320.4 372.1 324.4 375.5 328.0 377.9 C331.6 380.3 335.5 381.8 338.8 383.2 C342.1 384.6 346.5 385.9 348.0 386.5" fill="none" stroke="#e8f040" stroke-width="0.9"/>
<circle cx="342.3" cy="384.6" r="1.1" fill="#f0f020"/><circle cx="348.7" cy="385.9" r="1.1" fill="#f0f020"/>
<path d="M402.6 275.0 C402.6 278.2 400.9 288.6 402.3 294.0 C403.7 299.4 407.5 303.9 411.0 307.7 C414.5 311.5 419.2 313.6 423.5 317.0 C427.8 320.4 433.4 324.4 437.0 328.3 C440.6 332.2 442.5 336.7 445.0 340.2 C447.5 343.7 449.4 346.2 452.0 349.3 C454.6 352.4 457.3 356.2 460.5 358.7 C463.7 361.2 467.4 363.2 471.0 364.2 C474.6 365.2 480.0 364.8 481.8 364.9" fill="none" stroke="#30e0f0" stroke-width="0.9"/>
<path d="M457.0 216.0 C457.4 222.2 457.5 243.3 459.4 252.9 C461.3 262.5 463.3 266.9 468.6 273.4 C473.9 279.9 483.0 286.4 491.4 291.7 C499.8 297.0 513.0 300.4 518.9 305.4 C524.8 310.3 525.0 316.4 526.9 321.4 C528.8 326.3 528.2 330.9 530.3 335.1 C532.4 339.3 537.2 344.4 539.4 346.6 C541.6 348.8 542.6 347.9 543.3 348.2" fill="none" stroke="#30e0f0" stroke-width="0.9"/>
<path d="M488.0 195.0 C488.2 199.0 488.3 211.5 489.1 218.9 C489.9 226.3 490.7 232.9 492.6 239.4 C494.5 245.9 497.0 252.0 500.6 257.7 C504.2 263.4 508.2 269.1 514.3 273.7 C520.4 278.3 530.3 282.3 537.1 285.1 C543.9 287.9 549.2 288.8 555.0 290.7 C560.8 292.6 568.3 294.9 572.1 296.4 C575.9 297.9 576.5 298.3 577.9 299.8 C579.3 301.3 580.4 303.6 580.7 305.5 C581.0 307.4 580.4 309.6 579.8 311.2 C579.2 312.8 577.9 313.7 576.9 315.0 C575.9 316.3 574.5 318.2 574.0 318.8" fill="none" stroke="#e878e8" stroke-width="0.9"/>
<path d="M612.6 277.7 C611.3 278.2 608.2 279.4 605.0 280.7 C601.8 282.0 596.7 283.9 593.1 285.5 C589.5 287.1 586.8 288.3 583.6 290.2 C580.4 292.1 576.4 294.7 574.0 296.9 C571.6 299.1 570.3 301.4 569.3 303.6 C568.3 305.8 567.9 308.1 567.9 310.2 C567.9 312.3 568.5 314.4 569.3 316.0 C570.1 317.6 572.0 319.2 572.6 319.8" fill="none" stroke="#ff50ff" stroke-width="1.3"/>
<path d="M612.3 255.1 L576 320.5" fill="none" stroke="#ff50ff" stroke-width="1.2"/>
<path d="M542.7 170.0 C542.8 177.7 542.1 205.9 543.0 216.4 C543.9 226.9 545.0 226.3 548.0 233.0 C551.0 239.7 556.6 251.1 561.1 256.6 C565.6 262.1 570.2 263.4 575.0 266.0 C579.8 268.6 585.8 270.4 590.0 272.0 C594.2 273.6 598.3 275.0 600.0 275.6" fill="none" stroke="#b8bcb0" stroke-width="0.7"/>
<path d="M510.9 159.0 C511.5 167.1 513.0 194.8 514.3 207.4 C515.6 220.1 516.6 227.3 518.9 234.9 C521.2 242.5 523.8 247.2 528.0 253.1 C532.2 259.0 538.7 265.9 544.0 270.3 C549.3 274.7 553.5 276.9 560.0 279.4 C566.5 281.9 576.2 283.8 582.9 285.1 C589.6 286.5 594.8 286.4 600.0 287.5 C605.2 288.6 610.6 290.5 614.3 292.0 C618.0 293.5 620.7 295.3 622.3 296.6 C623.9 297.9 624.4 298.5 624.0 300.0 C623.6 301.5 622.0 304.0 620.0 305.7 C618.0 307.4 614.1 309.4 612.0 310.3 C609.9 311.2 608.7 311.7 607.4 310.9 C606.1 310.1 605.3 307.7 604.0 305.7 C602.7 303.7 601.4 300.6 599.4 298.9 C597.4 297.2 593.2 296.1 592.0 295.5" fill="none" stroke="#e8f040" stroke-width="0.9"/>
<path d="M541.9 145.0 C542.1 150.8 542.7 171.7 543.3 180.0 C543.9 188.3 545.0 190.0 545.6 195.0 C546.2 200.0 546.5 205.8 547.0 210.0 C547.5 214.2 547.9 216.4 548.7 220.0 C549.5 223.6 550.4 227.7 551.6 231.6 C552.8 235.5 554.0 239.4 556.1 243.3 C558.2 247.2 561.4 251.7 564.3 255.0 C567.2 258.3 570.1 260.5 573.6 263.0 C577.1 265.5 580.8 267.9 585.2 270.0 C589.6 272.1 595.4 274.3 600.0 275.6 C604.6 276.9 608.3 276.9 612.6 277.7 C616.9 278.5 619.5 279.5 625.7 280.6 C631.9 281.8 643.5 283.3 650.0 284.6 C656.5 285.9 660.3 287.0 665.0 288.5 C669.7 290.0 677.5 291.9 678.0 293.7 C678.5 295.5 672.3 297.8 668.0 299.5 C663.7 301.2 654.7 303.2 652.0 304.0" fill="none" stroke="#f0f040" stroke-width="1"/>
<path d="M612.3 255.1 C614.2 255.2 620.8 255.1 624.0 255.8 C627.2 256.5 628.8 257.9 631.4 259.5 C634.0 261.1 637.5 263.3 639.4 265.7 C641.3 268.1 642.1 270.8 642.9 273.7 C643.7 276.6 643.5 279.5 644.0 282.9 C644.5 286.3 644.9 291.1 645.7 294.3 C646.5 297.5 647.2 300.7 648.6 302.3 C650.0 303.9 653.1 303.7 654.0 304.0" fill="none" stroke="#f0f040" stroke-width="1"/>
<circle cx="402.3" cy="259" r="1.2" fill="#f0f020"/>
<circle cx="402.3" cy="294" r="1.2" fill="#f0f020"/>
<circle cx="411" cy="307.7" r="1.2" fill="#f0f020"/>
<circle cx="423.5" cy="317" r="1.2" fill="#f0f020"/>
<circle cx="437" cy="328.3" r="1.2" fill="#f0f020"/>
<circle cx="445" cy="340.2" r="1.2" fill="#f0f020"/>
<circle cx="452" cy="349.3" r="1.2" fill="#f0f020"/>
<circle cx="460.5" cy="358.7" r="1.2" fill="#f0f020"/>
<circle cx="471" cy="364.2" r="1.2" fill="#f0f020"/>
<circle cx="481.8" cy="364.9" r="1.2" fill="#f0f020"/>
<circle cx="612.6" cy="277.7" r="2.2" fill="#e060e0" stroke="#111" stroke-width="1.1"/>
<path d="M568.5 316.5 L573.5 319.8 L568.5 320.5Z" fill="#111" stroke="#111" stroke-width="0.8"/>
</svg>
<div class="tx" style="left:472px;top:1px;font-size:8px;font-weight:bold;color:#111;transform:none">Z</div>
<div class="tx" style="left:185px;top:257px;font-size:8px;font-weight:bold;color:#111;transform:none">Y</div>
<div class="tx" style="left:0px;top:408.5px;font-size:8px;font-weight:bold;color:#111;transform:none">X</div>
<div class="a" style="left:578px;top:0;width:1px;height:462px;background:#7070f0"></div><div class="a" style="left:579px;top:0;width:1px;height:462px;background:#f4f4f8"></div>
</div>
<div id="status" class="a">
<div class="tx" style="left:2px;top:2px;font-size:7px">For Help, press F1.</div>
<div class="a" style="left:495px;top:1px;width:1px;height:9px;background:#d0d0d0"></div>
<div class="a" style="left:538px;top:1px;width:1px;height:9px;background:#d0d0d0"></div>
<div class="a" style="left:582px;top:1px;width:1px;height:9px;background:#d0d0d0"></div>
<div class="a" style="left:646.5px;top:1px;width:1px;height:9px;background:#d0d0d0"></div>
<div class="tx" style="left:282px;top:2px;font-size:7px;color:#000">L:0</div>
<div class="tx" style="left:497px;top:2px;font-size:7px;color:#000">Lat -10.0</div>
<div class="tx" style="left:541px;top:2px;font-size:7px;color:#000">Lon 35.0</div>
<div class="tx" style="left:585px;top:2px;font-size:7px;color:#000">Radius 115</div>
<div class="tx" style="left:649px;top:2px;font-size:7px;color:#000">Tilt 0.0</div>
<div class="a" style="left:0;top:9px;width:700px;height:2px;background:linear-gradient(#c8c8c8,#a8a8a8)"></div>
</div>
</body></html>
